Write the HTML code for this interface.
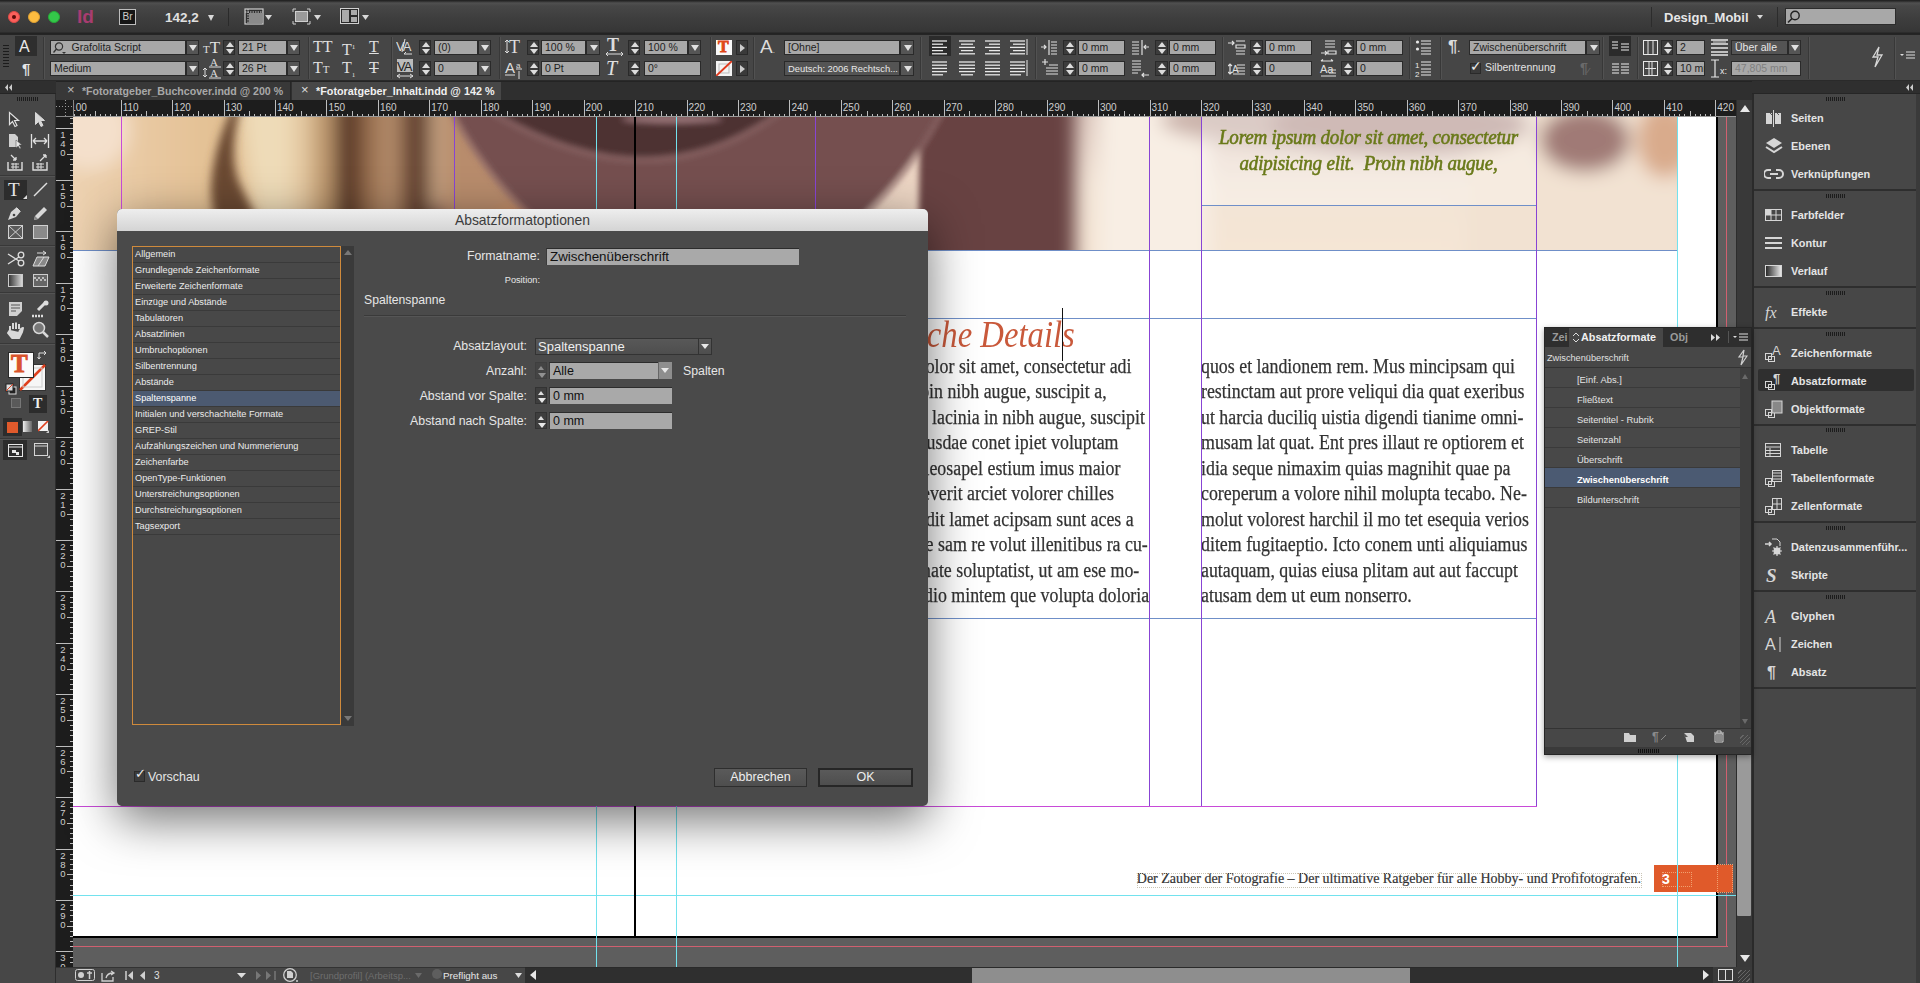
<!DOCTYPE html>
<html><head><meta charset="utf-8">
<style>
*{margin:0;padding:0;box-sizing:border-box}
html,body{width:1920px;height:983px;overflow:hidden;background:#474747;font-family:"Liberation Sans",sans-serif;color:#ddd}
.a{position:absolute}
#title{left:0;top:0;width:1920px;height:34px;background:linear-gradient(#414141,#353535);border-bottom:1px solid #222}
#ctrl{left:0;top:34px;width:1920px;height:47px;background:#454545;border-bottom:1px solid #2c2c2c}
#tabs{left:57px;top:81px;width:1695px;height:19px;background:#353535}
#hruler{left:73px;top:100px;width:1663px;height:17px;background:#1e1e1e}
#vruler{left:55px;top:100px;width:18px;height:867px;background:#1e1e1e}
#tools{left:0;top:81px;width:55px;height:902px;background:#474747;border-right:1px solid #333}
#paste{left:73px;top:117px;width:1663px;height:850px;background:#5e5e5e;overflow:hidden}
#page{left:0;top:0;width:1644px;height:820px;background:#fff;overflow:hidden}
#status{left:55px;top:967px;width:1697px;height:16px;background:#3a3a3a}
#vscroll{left:1736px;top:100px;width:16px;height:867px;background:#3b3b3b}
#dock{left:1752px;top:81px;width:168px;height:902px;background:#474747;border-left:3px solid #2f2f2f}
#dlg{left:117px;top:209px;width:811px;height:597px;background:#4a4a4a;border-radius:5px;box-shadow:0 14px 48px rgba(0,0,0,.55)}
#dlgt{left:0;top:0;width:811px;height:22px;background:linear-gradient(#eeeeee,#d4d4d4);border-radius:5px 5px 0 0;text-align:center;font-size:13.9px;color:#3c3c3c;line-height:22px}
#fpanel{left:1544px;top:327px;width:208px;height:428px;background:#4a4a4a;border:1px solid #2a2a2a}
.body{font-family:"Liberation Serif",serif;font-size:20px;color:#333;-webkit-text-stroke:0.25px #333;white-space:nowrap;line-height:20px}
.gv{background:#8a44d8;width:1px}
.gc{background:#6fe0ec}
.gb{background:#6f8fc8;height:1px}
.li{font-size:9.2px;line-height:15px;color:#ececec;padding-left:2px;border-bottom:1px solid #3a3a3a;white-space:nowrap}
.fld{background:#a9a9a9;border-top:1px solid #2c2c2c;border-left:1px solid #3a3a3a;color:#111;padding-left:3px;white-space:nowrap;overflow:hidden}
.dd{background:linear-gradient(#585858,#4e4e4e);border:1px solid #333;color:#eee;font-size:13px;line-height:15px;padding-left:2px}
.stp{width:12px;height:17px;background:#3e3e3e;border:1px solid #333}
.btn{background:linear-gradient(#5a5a5a,#4e4e4e);border:1px solid #2e2e2e;color:#eee;font-size:12.5px;line-height:17px;text-align:center}
.tri-up{width:0;height:0;border-left:4px solid transparent;border-right:4px solid transparent;border-bottom:5px solid #777}
.tri-dn{width:0;height:0;border-left:4px solid transparent;border-right:4px solid transparent;border-top:5px solid #777}
.tri-up2{width:0;height:0;border-left:3px solid transparent;border-right:3px solid transparent;border-bottom:4px solid #ddd}
.tri-dn2{width:0;height:0;border-left:4px solid transparent;border-right:4px solid transparent;border-top:5px solid #e8e8e8}
.cf{border:1px solid #2a2a2a;line-height:13px;padding-left:3px;white-space:nowrap;overflow:hidden;font-family:"Liberation Sans",sans-serif}

</style></head><body>
<div id="title" class="a"></div>
<div id="ctrl" class="a"></div>

<div class="a" style="left:0;top:0;width:1920px;height:35px;background:linear-gradient(#1e1e1e 0,#2a2a2a 1px,#505050 3px,#474747 6px,#3e3e3e 18px,#363636 32px,#222 33px,#262626 35px)"></div>
<div class="a" style="left:8px;top:11px;width:12px;height:12px;border-radius:50%;background:#fc605c;border:1px solid #de4a46"></div>
<div class="a" style="left:28px;top:11px;width:12px;height:12px;border-radius:50%;background:#fdbc40;border:1px solid #dea033"></div>
<div class="a" style="left:48px;top:11px;width:12px;height:12px;border-radius:50%;background:#34c84a;border:1px solid #27aa38"></div>
<div class="a" style="left:12px;top:15px;width:4px;height:4px;border-radius:50%;background:#5a0a08"></div>
<div class="a" style="left:77px;top:5px;font-size:19px;line-height:24px;color:#a83c70;font-weight:bold;letter-spacing:0px">Id</div>
<div class="a" style="left:119px;top:9px;width:17px;height:16px;background:#161616;border:1px solid #bdbdbd;font-size:10px;line-height:14px;color:#ccc;text-align:center">Br</div>
<div class="a" style="left:165px;top:9px;font-size:13.5px;line-height:17px;color:#e0e0e0;font-weight:bold">142,2</div>
<div class="a" style="left:208px;top:15px;width:0;height:0;border-left:3.5px solid transparent;border-right:3.5px solid transparent;border-top:6px solid #d8d8d8"></div>
<div class="a" style="left:228px;top:8px;width:1px;height:18px;background:#2a2a2a"></div>
<svg class="a" style="left:244px;top:8px" width="30" height="17"><rect x="1" y="1" width="18" height="15" fill="#2e2e2e" stroke="#cfcfcf" stroke-width="1.2"/><rect x="5" y="5" width="13" height="10" fill="#8a8a8a"/><path d="M1 4h18M4 1v15" stroke="#cfcfcf" stroke-width="1" stroke-dasharray="1.5 1"/><path d="M21 7h7l-3.5 5z" fill="#d8d8d8"/></svg>
<svg class="a" style="left:292px;top:8px" width="30" height="17"><path d="M1 4V1h3M15 1h3v3M1 13v3h3M15 16h3v-3" stroke="#cfcfcf" fill="none"/><rect x="3.5" y="3.5" width="12" height="10" fill="#9a9a9a" stroke="#cfcfcf"/><path d="M22 7h7l-3.5 5z" fill="#d8d8d8"/></svg>
<svg class="a" style="left:340px;top:8px" width="30" height="17"><rect x="0.5" y="0.5" width="18" height="15" fill="#2a2a2a" stroke="#d0d0d0"/><rect x="2" y="2" width="7" height="12" fill="#aaa"/><rect x="11" y="2" width="6" height="5" fill="#aaa"/><rect x="11" y="9" width="6" height="5" fill="#aaa"/><path d="M22 7h7l-3.5 5z" fill="#d8d8d8"/></svg>
<div class="a" style="left:1651px;top:7px;width:1px;height:20px;background:#2c2c2c"></div>
<div class="a" style="left:1664px;top:9px;font-size:13px;line-height:17px;color:#e6e6e6;font-weight:bold">Design_Mobil</div>
<div class="a" style="left:1757px;top:15px;width:0;height:0;border-left:3.0px solid transparent;border-right:3.0px solid transparent;border-top:4px solid #d8d8d8"></div>
<div class="a" style="left:1777px;top:7px;width:1px;height:20px;background:#2c2c2c"></div>
<div class="a" style="left:1785px;top:8px;width:111px;height:17px;background:#a8a8a8;border:1px solid #2c2c2c"></div>
<svg class="a" style="left:1786px;top:9px" width="16" height="16"><circle cx="9" cy="6.5" r="4.2" fill="none" stroke="#222" stroke-width="1.4"/><path d="M6 9.5l-4 4" stroke="#222" stroke-width="1.6"/></svg>
<div class="a" style="left:0;top:35px;width:1920px;height:46px;background:#464646;border-bottom:1px solid #2a2a2a"></div>
<div class="a" style="left:3px;top:45px;width:6px;height:23px;background:repeating-linear-gradient(#1c1c1c 0 1px,transparent 1px 3px)"></div>
<div class="a" style="left:15px;top:36px;width:22px;height:20px;background:#2e2e2e"></div>
<div class="a" style="left:19px;top:38px;font-family:'Liberation Sans';font-size:16px;line-height:18px;color:#eaeaea;white-space:nowrap;">A</div>
<div class="a" style="left:22px;top:60px;font-family:'Liberation Sans';font-size:15px;line-height:17px;color:#e6e6e6;white-space:nowrap;font-weight:bold">¶</div>
<div class="a" style="left:43px;top:37px;width:1px;height:42px;background:#383838"></div>
<div class="a" style="left:44px;top:37px;width:1px;height:42px;background:#525252"></div>
<div class="a cf" style="left:50px;top:40px;width:136px;height:15px;background:#a8a8a8;color:#1e1e1e;font-size:10.5px">&nbsp;&nbsp;&nbsp;&nbsp;&nbsp;&nbsp;Grafolita Script</div>
<svg class="a" style="left:52px;top:41px" width="16" height="14"><circle cx="7" cy="5.5" r="3.6" fill="none" stroke="#333" stroke-width="1.2"/><path d="M4.5 8l-3 3.5" stroke="#333" stroke-width="1.3"/><path d="M10 11h4l-2 2z" fill="#333"/></svg>
<div class="a" style="left:186px;top:40px;width:13px;height:15px;background:#555;border:1px solid #2a2a2a"><div class="a" style="left:2.0px;top:4px;width:0;height:0;border-left:4px solid transparent;border-right:4px solid transparent;border-top:6px solid #e0e0e0"></div></div>
<div class="a cf" style="left:50px;top:61px;width:136px;height:15px;background:#a8a8a8;color:#1e1e1e;font-size:10.5px">Medium</div>
<div class="a" style="left:186px;top:61px;width:13px;height:15px;background:#555;border:1px solid #2a2a2a"><div class="a" style="left:2.0px;top:4px;width:0;height:0;border-left:4px solid transparent;border-right:4px solid transparent;border-top:6px solid #e0e0e0"></div></div>
<div class="a" style="left:203px;top:38px;font-family:'Liberation Serif';font-size:17px;line-height:19px;color:#e0e0e0;white-space:nowrap;"><span style="font-size:11px">T</span>T</div>
<div class="a" style="left:223px;top:40px;width:12px;height:15px;background:#3c3c3c;border:1px solid #2a2a2a"><div class="a" style="left:1.5px;top:1px;width:0;height:0;border-left:4px solid transparent;border-right:4px solid transparent;border-bottom:5px solid #ddd"></div><div class="a" style="left:1.5px;top:8px;width:0;height:0;border-left:4px solid transparent;border-right:4px solid transparent;border-top:5px solid #ddd"></div></div>
<div class="a cf" style="left:238px;top:40px;width:49px;height:15px;background:#a8a8a8;color:#1e1e1e;font-size:10.5px">21 Pt</div>
<div class="a" style="left:287px;top:40px;width:13px;height:15px;background:#555;border:1px solid #2a2a2a"><div class="a" style="left:2.0px;top:4px;width:0;height:0;border-left:4px solid transparent;border-right:4px solid transparent;border-top:6px solid #e0e0e0"></div></div>
<svg class="a" style="left:202px;top:57px" width="20" height="22"><text x="8" y="9" font-family="Liberation Serif" font-size="11" fill="#ddd">A</text><text x="8" y="20" font-family="Liberation Serif" font-size="11" fill="#ddd">A</text><path d="M7 10h12M7 21h12" stroke="#ddd"/><path d="M3 11v9M1 13l2-2 2 2M1 18l2 2 2-2" stroke="#ddd" fill="none"/></svg>
<div class="a" style="left:223px;top:61px;width:12px;height:15px;background:#3c3c3c;border:1px solid #2a2a2a"><div class="a" style="left:1.5px;top:1px;width:0;height:0;border-left:4px solid transparent;border-right:4px solid transparent;border-bottom:5px solid #ddd"></div><div class="a" style="left:1.5px;top:8px;width:0;height:0;border-left:4px solid transparent;border-right:4px solid transparent;border-top:5px solid #ddd"></div></div>
<div class="a cf" style="left:238px;top:61px;width:49px;height:15px;background:#a8a8a8;color:#1e1e1e;font-size:10.5px">26 Pt</div>
<div class="a" style="left:287px;top:61px;width:13px;height:15px;background:#555;border:1px solid #2a2a2a"><div class="a" style="left:2.0px;top:4px;width:0;height:0;border-left:4px solid transparent;border-right:4px solid transparent;border-top:6px solid #e0e0e0"></div></div>
<div class="a" style="left:308px;top:37px;width:1px;height:42px;background:#383838"></div>
<div class="a" style="left:309px;top:37px;width:1px;height:42px;background:#525252"></div>
<div class="a" style="left:313px;top:38px;font-family:'Liberation Serif';font-size:16px;line-height:18px;color:#e0e0e0;white-space:nowrap;">TT</div>
<div class="a" style="left:342px;top:38px;font-family:'Liberation Serif';font-size:16px;line-height:18px;color:#e0e0e0;white-space:nowrap;">T<sup style="font-size:7px">1</sup></div>
<div class="a" style="left:369px;top:38px;font-family:'Liberation Serif';font-size:16px;line-height:18px;color:#e0e0e0;white-space:nowrap;"><u>T</u></div>
<div class="a" style="left:313px;top:59px;font-family:'Liberation Serif';font-size:16px;line-height:18px;color:#e0e0e0;white-space:nowrap;">T<span style="font-size:11px">T</span></div>
<div class="a" style="left:342px;top:59px;font-family:'Liberation Serif';font-size:16px;line-height:18px;color:#e0e0e0;white-space:nowrap;">T<sub style="font-size:7px">1</sub></div>
<div class="a" style="left:369px;top:59px;font-family:'Liberation Serif';font-size:16px;line-height:18px;color:#e0e0e0;white-space:nowrap;"><s>T</s></div>
<div class="a" style="left:391px;top:37px;width:1px;height:42px;background:#383838"></div>
<div class="a" style="left:392px;top:37px;width:1px;height:42px;background:#525252"></div>
<svg class="a" style="left:396px;top:38px" width="18" height="18"><text x="0" y="13" font-family="Liberation Sans" font-size="13" fill="#ddd" letter-spacing="-1">VA</text><path d="M9 1l-3 13" stroke="#ddd"/><path d="M8 16h8M8 16l2-2" stroke="#ddd" fill="none"/></svg>
<div class="a" style="left:419px;top:40px;width:12px;height:15px;background:#3c3c3c;border:1px solid #2a2a2a"><div class="a" style="left:1.5px;top:1px;width:0;height:0;border-left:4px solid transparent;border-right:4px solid transparent;border-bottom:5px solid #ddd"></div><div class="a" style="left:1.5px;top:8px;width:0;height:0;border-left:4px solid transparent;border-right:4px solid transparent;border-top:5px solid #ddd"></div></div>
<div class="a cf" style="left:434px;top:40px;width:44px;height:15px;background:#a8a8a8;color:#1e1e1e;font-size:10.5px">(0)</div>
<div class="a" style="left:478px;top:40px;width:13px;height:15px;background:#555;border:1px solid #2a2a2a"><div class="a" style="left:2.0px;top:4px;width:0;height:0;border-left:4px solid transparent;border-right:4px solid transparent;border-top:6px solid #e0e0e0"></div></div>
<svg class="a" style="left:396px;top:59px" width="18" height="20"><rect x="1" y="0" width="16" height="13" fill="#bbb"/><text x="1" y="12" font-family="Liberation Sans" font-size="13" fill="#222" letter-spacing="-1">VA</text><path d="M1 17h16M1 17l3-2M1 17l3 2M17 17l-3-2M17 17l-3 2" stroke="#ddd" fill="none"/></svg>
<div class="a" style="left:419px;top:61px;width:12px;height:15px;background:#3c3c3c;border:1px solid #2a2a2a"><div class="a" style="left:1.5px;top:1px;width:0;height:0;border-left:4px solid transparent;border-right:4px solid transparent;border-bottom:5px solid #ddd"></div><div class="a" style="left:1.5px;top:8px;width:0;height:0;border-left:4px solid transparent;border-right:4px solid transparent;border-top:5px solid #ddd"></div></div>
<div class="a cf" style="left:434px;top:61px;width:44px;height:15px;background:#a8a8a8;color:#1e1e1e;font-size:10.5px">0</div>
<div class="a" style="left:478px;top:61px;width:13px;height:15px;background:#555;border:1px solid #2a2a2a"><div class="a" style="left:2.0px;top:4px;width:0;height:0;border-left:4px solid transparent;border-right:4px solid transparent;border-top:6px solid #e0e0e0"></div></div>
<div class="a" style="left:499px;top:37px;width:1px;height:42px;background:#383838"></div>
<div class="a" style="left:500px;top:37px;width:1px;height:42px;background:#525252"></div>
<svg class="a" style="left:504px;top:38px" width="20" height="18"><text x="5" y="15" font-family="Liberation Serif" font-size="18" fill="#ddd">T</text><path d="M3 2v13M1 4l2-2 2 2M1 13l2 2 2-2" stroke="#ddd" fill="none"/></svg>
<div class="a" style="left:527px;top:40px;width:12px;height:15px;background:#3c3c3c;border:1px solid #2a2a2a"><div class="a" style="left:1.5px;top:1px;width:0;height:0;border-left:4px solid transparent;border-right:4px solid transparent;border-bottom:5px solid #ddd"></div><div class="a" style="left:1.5px;top:8px;width:0;height:0;border-left:4px solid transparent;border-right:4px solid transparent;border-top:5px solid #ddd"></div></div>
<div class="a cf" style="left:541px;top:40px;width:45px;height:15px;background:#a8a8a8;color:#1e1e1e;font-size:10.5px">100 %</div>
<div class="a" style="left:586px;top:40px;width:14px;height:15px;background:#555;border:1px solid #2a2a2a"><div class="a" style="left:2.5px;top:4px;width:0;height:0;border-left:4px solid transparent;border-right:4px solid transparent;border-top:6px solid #e0e0e0"></div></div>
<svg class="a" style="left:504px;top:59px" width="20" height="20"><text x="1" y="14" font-family="Liberation Sans" font-size="15" fill="#ddd">A</text><text x="12" y="9" font-family="Liberation Sans" font-size="8" fill="#ddd">a</text><path d="M1 16h10M12 10h6M15 12v8" stroke="#ddd"/></svg>
<div class="a" style="left:527px;top:61px;width:12px;height:15px;background:#3c3c3c;border:1px solid #2a2a2a"><div class="a" style="left:1.5px;top:1px;width:0;height:0;border-left:4px solid transparent;border-right:4px solid transparent;border-bottom:5px solid #ddd"></div><div class="a" style="left:1.5px;top:8px;width:0;height:0;border-left:4px solid transparent;border-right:4px solid transparent;border-top:5px solid #ddd"></div></div>
<div class="a cf" style="left:541px;top:61px;width:59px;height:15px;background:#a8a8a8;color:#1e1e1e;font-size:10.5px">0 Pt</div>
<svg class="a" style="left:605px;top:37px" width="20" height="20"><text x="2" y="14" font-family="Liberation Serif" font-size="18" font-weight="bold" fill="#ddd">T</text><path d="M1 17h17M1 17l2-2M1 17l2 2M18 17l-2-2M18 17l-2 2" stroke="#ddd" fill="none"/></svg>
<div class="a" style="left:628px;top:40px;width:12px;height:15px;background:#3c3c3c;border:1px solid #2a2a2a"><div class="a" style="left:1.5px;top:1px;width:0;height:0;border-left:4px solid transparent;border-right:4px solid transparent;border-bottom:5px solid #ddd"></div><div class="a" style="left:1.5px;top:8px;width:0;height:0;border-left:4px solid transparent;border-right:4px solid transparent;border-top:5px solid #ddd"></div></div>
<div class="a cf" style="left:644px;top:40px;width:44px;height:15px;background:#a8a8a8;color:#1e1e1e;font-size:10.5px">100 %</div>
<div class="a" style="left:688px;top:40px;width:13px;height:15px;background:#555;border:1px solid #2a2a2a"><div class="a" style="left:2.0px;top:4px;width:0;height:0;border-left:4px solid transparent;border-right:4px solid transparent;border-top:6px solid #e0e0e0"></div></div>
<div class="a" style="left:606px;top:57px;font-family:'Liberation Serif';font-size:20px;line-height:22px;color:#e0e0e0;white-space:nowrap;"><i>T</i></div>
<div class="a" style="left:628px;top:61px;width:12px;height:15px;background:#3c3c3c;border:1px solid #2a2a2a"><div class="a" style="left:1.5px;top:1px;width:0;height:0;border-left:4px solid transparent;border-right:4px solid transparent;border-bottom:5px solid #ddd"></div><div class="a" style="left:1.5px;top:8px;width:0;height:0;border-left:4px solid transparent;border-right:4px solid transparent;border-top:5px solid #ddd"></div></div>
<div class="a cf" style="left:644px;top:61px;width:57px;height:15px;background:#a8a8a8;color:#1e1e1e;font-size:10.5px">0°</div>
<div class="a" style="left:710px;top:37px;width:1px;height:42px;background:#383838"></div>
<div class="a" style="left:711px;top:37px;width:1px;height:42px;background:#525252"></div>
<div class="a" style="left:716px;top:40px;width:16px;height:15px;background:#fafafa"></div>
<div class="a" style="left:718px;top:38px;font-family:'Liberation Serif';font-size:16px;line-height:18px;color:#e0461a;white-space:nowrap;-webkit-text-stroke:0.8px #e0461a"><b>T</b></div>
<div class="a" style="left:736px;top:40px;width:12px;height:15px;background:#3a3a3a;border:1px solid #2a2a2a"><div class="a" style="left:3px;top:3px;width:0;height:0;border-top:4px solid transparent;border-bottom:4px solid transparent;border-left:5px solid #ccc"></div></div>
<svg class="a" style="left:716px;top:61px" width="16" height="15"><rect width="16" height="15" fill="#f4f4f4"/><rect x="3" y="3" width="10" height="9" fill="none" stroke="#bbb"/><path d="M0 15L16 0" stroke="#e03a1e" stroke-width="2"/></svg>
<div class="a" style="left:736px;top:61px;width:12px;height:15px;background:#3a3a3a;border:1px solid #2a2a2a"><div class="a" style="left:3px;top:3px;width:0;height:0;border-top:4px solid transparent;border-bottom:4px solid transparent;border-left:5px solid #ccc"></div></div>
<div class="a" style="left:753px;top:37px;width:1px;height:42px;background:#383838"></div>
<div class="a" style="left:754px;top:37px;width:1px;height:42px;background:#525252"></div>
<div class="a" style="left:760px;top:36px;font-family:'Liberation Sans';font-size:19px;line-height:21px;color:#dcdcdc;white-space:nowrap;">A<span style="font-size:8px">.</span></div>
<div class="a cf" style="left:784px;top:40px;width:116px;height:15px;background:#a8a8a8;color:#1e1e1e;font-size:10.5px">[Ohne]</div>
<div class="a" style="left:900px;top:40px;width:14px;height:15px;background:#555;border:1px solid #2a2a2a"><div class="a" style="left:2.5px;top:4px;width:0;height:0;border-left:4px solid transparent;border-right:4px solid transparent;border-top:6px solid #e0e0e0"></div></div>
<div class="a cf" style="left:784px;top:61px;width:116px;height:15px;background:#545454;color:#e8e8e8;font-size:9.4px">Deutsch: 2006 Rechtsch...</div>
<div class="a" style="left:900px;top:61px;width:14px;height:15px;background:#555;border:1px solid #2a2a2a"><div class="a" style="left:2.5px;top:4px;width:0;height:0;border-left:4px solid transparent;border-right:4px solid transparent;border-top:6px solid #e0e0e0"></div></div>
<div class="a" style="left:920px;top:37px;width:1px;height:42px;background:#383838"></div>
<div class="a" style="left:921px;top:37px;width:1px;height:42px;background:#525252"></div>
<div class="a" style="left:929px;top:36px;width:22px;height:20px;background:#2b2b2b"></div>
<svg class="a" style="left:931px;top:39px" width="20" height="17"><path d="M1 2.0h15" stroke="#e8e8e8" stroke-width="1.3"/><path d="M1 5.2h11" stroke="#e8e8e8" stroke-width="1.3"/><path d="M1 8.4h15" stroke="#e8e8e8" stroke-width="1.3"/><path d="M1 11.6h11" stroke="#e8e8e8" stroke-width="1.3"/><path d="M1 14.8h15" stroke="#e8e8e8" stroke-width="1.3"/></svg>
<svg class="a" style="left:958px;top:39px" width="20" height="17"><path d="M1 2.0h16" stroke="#e8e8e8" stroke-width="1.3"/><path d="M3 5.2h12" stroke="#e8e8e8" stroke-width="1.3"/><path d="M1 8.4h16" stroke="#e8e8e8" stroke-width="1.3"/><path d="M3 11.6h12" stroke="#e8e8e8" stroke-width="1.3"/><path d="M1 14.8h16" stroke="#e8e8e8" stroke-width="1.3"/></svg>
<svg class="a" style="left:984px;top:39px" width="20" height="17"><path d="M1 2.0h15" stroke="#e8e8e8" stroke-width="1.3"/><path d="M5 5.2h11" stroke="#e8e8e8" stroke-width="1.3"/><path d="M1 8.4h15" stroke="#e8e8e8" stroke-width="1.3"/><path d="M5 11.6h11" stroke="#e8e8e8" stroke-width="1.3"/><path d="M1 14.8h15" stroke="#e8e8e8" stroke-width="1.3"/></svg>
<svg class="a" style="left:1009px;top:39px" width="20" height="17"><path d="M1 2.0h15" stroke="#e8e8e8" stroke-width="1.3"/><path d="M4 5.2h12" stroke="#e8e8e8" stroke-width="1.3"/><path d="M1 8.4h15" stroke="#e8e8e8" stroke-width="1.3"/><path d="M4 11.6h12" stroke="#e8e8e8" stroke-width="1.3"/><path d="M1 14.8h15" stroke="#e8e8e8" stroke-width="1.3"/><path d="M18 0v16" stroke="#e8e8e8"/></svg>
<svg class="a" style="left:931px;top:60px" width="20" height="17"><path d="M1 2.0h15" stroke="#e8e8e8" stroke-width="1.3"/><path d="M1 5.2h15" stroke="#e8e8e8" stroke-width="1.3"/><path d="M1 8.4h15" stroke="#e8e8e8" stroke-width="1.3"/><path d="M1 11.6h15" stroke="#e8e8e8" stroke-width="1.3"/><path d="M1 14.8h11" stroke="#e8e8e8" stroke-width="1.3"/></svg>
<svg class="a" style="left:958px;top:60px" width="20" height="17"><path d="M1 2.0h16" stroke="#e8e8e8" stroke-width="1.3"/><path d="M1 5.2h16" stroke="#e8e8e8" stroke-width="1.3"/><path d="M1 8.4h16" stroke="#e8e8e8" stroke-width="1.3"/><path d="M1 11.6h16" stroke="#e8e8e8" stroke-width="1.3"/><path d="M3 14.8h12" stroke="#e8e8e8" stroke-width="1.3"/></svg>
<svg class="a" style="left:984px;top:60px" width="20" height="17"><path d="M1 2.0h15" stroke="#e8e8e8" stroke-width="1.3"/><path d="M1 5.2h15" stroke="#e8e8e8" stroke-width="1.3"/><path d="M1 8.4h15" stroke="#e8e8e8" stroke-width="1.3"/><path d="M1 11.6h15" stroke="#e8e8e8" stroke-width="1.3"/><path d="M1 14.8h15" stroke="#e8e8e8" stroke-width="1.3"/></svg>
<svg class="a" style="left:1009px;top:60px" width="20" height="17"><path d="M1 2.0h15" stroke="#e8e8e8" stroke-width="1.3"/><path d="M1 5.2h15" stroke="#e8e8e8" stroke-width="1.3"/><path d="M1 8.4h15" stroke="#e8e8e8" stroke-width="1.3"/><path d="M1 11.6h15" stroke="#e8e8e8" stroke-width="1.3"/><path d="M1 14.8h11" stroke="#e8e8e8" stroke-width="1.3"/><path d="M18 0v16" stroke="#e8e8e8"/></svg>
<div class="a" style="left:1035px;top:37px;width:1px;height:42px;background:#383838"></div>
<div class="a" style="left:1036px;top:37px;width:1px;height:42px;background:#525252"></div>
<svg class="a" style="left:1041px;top:39px" width="19" height="19"><g stroke="#e0e0e0" stroke-width="1.2" fill="none"><path d="M0 8h5M3 6l2 2-2 2M8 1v15M10 3h6M10 6h6M10 9h6M10 12h6M10 15h6"/></g></svg>
<div class="a" style="left:1063px;top:40px;width:13px;height:15px;background:#3c3c3c;border:1px solid #2a2a2a"><div class="a" style="left:2.0px;top:1px;width:0;height:0;border-left:4px solid transparent;border-right:4px solid transparent;border-bottom:5px solid #ddd"></div><div class="a" style="left:2.0px;top:8px;width:0;height:0;border-left:4px solid transparent;border-right:4px solid transparent;border-top:5px solid #ddd"></div></div>
<div class="a cf" style="left:1078px;top:40px;width:47px;height:15px;background:#a8a8a8;color:#1e1e1e;font-size:10.5px">0 mm</div>
<svg class="a" style="left:1131px;top:39px" width="19" height="19"><g stroke="#e0e0e0" stroke-width="1.2" fill="none"><path d="M1 3h7M1 6h7M1 9h7M1 12h7M1 15h7M11 1v15M18 8h-5M15 6l-2 2 2 2"/></g></svg>
<div class="a" style="left:1155px;top:40px;width:13px;height:15px;background:#3c3c3c;border:1px solid #2a2a2a"><div class="a" style="left:2.0px;top:1px;width:0;height:0;border-left:4px solid transparent;border-right:4px solid transparent;border-bottom:5px solid #ddd"></div><div class="a" style="left:2.0px;top:8px;width:0;height:0;border-left:4px solid transparent;border-right:4px solid transparent;border-top:5px solid #ddd"></div></div>
<div class="a cf" style="left:1169px;top:40px;width:47px;height:15px;background:#a8a8a8;color:#1e1e1e;font-size:10.5px">0 mm</div>
<svg class="a" style="left:1041px;top:59px" width="19" height="19"><g stroke="#e0e0e0" stroke-width="1.2" fill="none"><path d="M1 3h6M4 0v6M8 6h9M5 9h12M5 12h12M5 15h12"/></g></svg>
<div class="a" style="left:1063px;top:61px;width:13px;height:15px;background:#3c3c3c;border:1px solid #2a2a2a"><div class="a" style="left:2.0px;top:1px;width:0;height:0;border-left:4px solid transparent;border-right:4px solid transparent;border-bottom:5px solid #ddd"></div><div class="a" style="left:2.0px;top:8px;width:0;height:0;border-left:4px solid transparent;border-right:4px solid transparent;border-top:5px solid #ddd"></div></div>
<div class="a cf" style="left:1078px;top:61px;width:47px;height:15px;background:#a8a8a8;color:#1e1e1e;font-size:10.5px">0 mm</div>
<svg class="a" style="left:1131px;top:59px" width="19" height="19"><g stroke="#e0e0e0" stroke-width="1.2" fill="none"><path d="M1 2h9M1 5h9M1 8h9M1 11h9M1 14h6M11 16h7M13 14l-2 2 2 2"/></g></svg>
<div class="a" style="left:1155px;top:61px;width:13px;height:15px;background:#3c3c3c;border:1px solid #2a2a2a"><div class="a" style="left:2.0px;top:1px;width:0;height:0;border-left:4px solid transparent;border-right:4px solid transparent;border-bottom:5px solid #ddd"></div><div class="a" style="left:2.0px;top:8px;width:0;height:0;border-left:4px solid transparent;border-right:4px solid transparent;border-top:5px solid #ddd"></div></div>
<div class="a cf" style="left:1169px;top:61px;width:47px;height:15px;background:#a8a8a8;color:#1e1e1e;font-size:10.5px">0 mm</div>
<div class="a" style="left:1222px;top:37px;width:1px;height:42px;background:#383838"></div>
<div class="a" style="left:1223px;top:37px;width:1px;height:42px;background:#525252"></div>
<svg class="a" style="left:1228px;top:39px" width="19" height="19"><g stroke="#e0e0e0" stroke-width="1.2" fill="none"><path d="M0 4h6M4 2l2 2-2 2M8 2h9M8 6h9v3H8zM8 12h9M8 15h9"/></g></svg>
<div class="a" style="left:1250px;top:40px;width:13px;height:15px;background:#3c3c3c;border:1px solid #2a2a2a"><div class="a" style="left:2.0px;top:1px;width:0;height:0;border-left:4px solid transparent;border-right:4px solid transparent;border-bottom:5px solid #ddd"></div><div class="a" style="left:2.0px;top:8px;width:0;height:0;border-left:4px solid transparent;border-right:4px solid transparent;border-top:5px solid #ddd"></div></div>
<div class="a cf" style="left:1265px;top:40px;width:47px;height:15px;background:#a8a8a8;color:#1e1e1e;font-size:10.5px">0 mm</div>
<svg class="a" style="left:1319px;top:39px" width="19" height="19"><g stroke="#e0e0e0" stroke-width="1.2" fill="none"><path d="M6 2h10M6 5h10M6 8h10M2 14h6M6 12l2 2-2 2M9 12h8v3H9z"/></g></svg>
<div class="a" style="left:1341px;top:40px;width:13px;height:15px;background:#3c3c3c;border:1px solid #2a2a2a"><div class="a" style="left:2.0px;top:1px;width:0;height:0;border-left:4px solid transparent;border-right:4px solid transparent;border-bottom:5px solid #ddd"></div><div class="a" style="left:2.0px;top:8px;width:0;height:0;border-left:4px solid transparent;border-right:4px solid transparent;border-top:5px solid #ddd"></div></div>
<div class="a cf" style="left:1356px;top:40px;width:47px;height:15px;background:#a8a8a8;color:#1e1e1e;font-size:10.5px">0 mm</div>
<svg class="a" style="left:1228px;top:59px" width="19" height="19"><g stroke="#e0e0e0" stroke-width="1.2" fill="none"><path d="M2 5v10M0 7l2-2 2 2M0 13l2 2 2-2M9 6h8M9 9h8M9 12h8M5 15h12"/><text x="4" y="14" font-family="Liberation Sans" font-size="10" fill="#e0e0e0" stroke="none">A</text></g></svg>
<div class="a" style="left:1250px;top:61px;width:13px;height:15px;background:#3c3c3c;border:1px solid #2a2a2a"><div class="a" style="left:2.0px;top:1px;width:0;height:0;border-left:4px solid transparent;border-right:4px solid transparent;border-bottom:5px solid #ddd"></div><div class="a" style="left:2.0px;top:8px;width:0;height:0;border-left:4px solid transparent;border-right:4px solid transparent;border-top:5px solid #ddd"></div></div>
<div class="a cf" style="left:1265px;top:61px;width:47px;height:15px;background:#a8a8a8;color:#1e1e1e;font-size:10.5px">0</div>
<svg class="a" style="left:1319px;top:59px" width="19" height="19"><g stroke="#e0e0e0" stroke-width="1.2" fill="none"><path d="M2 2h12M2 2l2-1.5M14 2l-2-1.5M2 17h15M10 11h7M10 14h7"/><text x="1" y="14" font-family="Liberation Sans" font-size="11" fill="#e0e0e0" stroke="none">Aa</text></g></svg>
<div class="a" style="left:1341px;top:61px;width:13px;height:15px;background:#3c3c3c;border:1px solid #2a2a2a"><div class="a" style="left:2.0px;top:1px;width:0;height:0;border-left:4px solid transparent;border-right:4px solid transparent;border-bottom:5px solid #ddd"></div><div class="a" style="left:2.0px;top:8px;width:0;height:0;border-left:4px solid transparent;border-right:4px solid transparent;border-top:5px solid #ddd"></div></div>
<div class="a cf" style="left:1356px;top:61px;width:47px;height:15px;background:#a8a8a8;color:#1e1e1e;font-size:10.5px">0</div>
<div class="a" style="left:1409px;top:37px;width:1px;height:42px;background:#383838"></div>
<div class="a" style="left:1410px;top:37px;width:1px;height:42px;background:#525252"></div>
<svg class="a" style="left:1415px;top:39px" width="18" height="18"><circle cx="2.5" cy="3" r="1.6" fill="#e8e8e8"/><circle cx="2.5" cy="10" r="1.6" fill="#e8e8e8"/><path d="M6 2h10M6 5h10M6 9h10M6 12h10M6 15h10" stroke="#e8e8e8" stroke-width="1.2"/></svg>
<svg class="a" style="left:1415px;top:60px" width="18" height="18"><text x="0" y="8" font-family="Liberation Sans" font-size="8" fill="#e8e8e8">1</text><text x="0" y="17" font-family="Liberation Sans" font-size="8" fill="#e8e8e8">2</text><path d="M6 2h10M6 5h10M6 9h10M6 12h10M6 15h10" stroke="#e8e8e8" stroke-width="1.2"/></svg>
<div class="a" style="left:1440px;top:37px;width:1px;height:42px;background:#383838"></div>
<div class="a" style="left:1441px;top:37px;width:1px;height:42px;background:#525252"></div>
<div class="a" style="left:1448px;top:37px;font-family:'Liberation Sans';font-size:17px;line-height:19px;color:#dcdcdc;white-space:nowrap;font-weight:bold">¶<span style="font-size:9px">.</span></div>
<div class="a cf" style="left:1469px;top:40px;width:117px;height:15px;background:#a8a8a8;color:#1e1e1e;font-size:10.5px">Zwischenüberschrift</div>
<div class="a" style="left:1586px;top:40px;width:14px;height:15px;background:#555;border:1px solid #2a2a2a"><div class="a" style="left:2.5px;top:4px;width:0;height:0;border-left:4px solid transparent;border-right:4px solid transparent;border-top:6px solid #e0e0e0"></div></div>
<div class="a" style="left:1470px;top:63px;width:11px;height:11px;background:#3a3a3a;border:1px solid #2a2a2a"></div>
<div class="a" style="left:1470px;top:58px;font-family:'Liberation Sans';font-size:14px;line-height:16px;color:#eee;white-space:nowrap;">&#10003;</div>
<div class="a" style="left:1485px;top:61px;font-family:'Liberation Sans';font-size:10.5px;line-height:12.5px;color:#e4e4e4;white-space:nowrap;">Silbentrennung</div>
<div class="a" style="left:1580px;top:60px;font-family:'Liberation Sans';font-size:14px;line-height:16px;color:#6a6a6a;white-space:nowrap;font-weight:bold">¶<span style="font-size:8px">⁄</span></div>
<div class="a" style="left:1602px;top:37px;width:1px;height:42px;background:#383838"></div>
<div class="a" style="left:1603px;top:37px;width:1px;height:42px;background:#525252"></div>
<div class="a" style="left:1609px;top:36px;width:22px;height:20px;background:#2b2b2b"></div>
<svg class="a" style="left:1611px;top:41px" width="20" height="12"><path d="M1 1h6M1 4h6M1 7h6M10 3h8M10 6h8M10 9h8" stroke="#eee" stroke-width="1.2"/></svg>
<svg class="a" style="left:1611px;top:62px" width="20" height="12"><path d="M1 2h7M1 5h7M1 8h7M1 11h7M10 2h8M10 5h8M10 8h8M10 11h8" stroke="#eee" stroke-width="1.2"/></svg>
<div class="a" style="left:1637px;top:37px;width:1px;height:42px;background:#383838"></div>
<div class="a" style="left:1638px;top:37px;width:1px;height:42px;background:#525252"></div>
<svg class="a" style="left:1643px;top:40px" width="16" height="15"><rect x="0.5" y="0.5" width="14" height="14" fill="none" stroke="#e8e8e8"/><path d="M5 1v13M10 1v13" stroke="#e8e8e8"/></svg>
<div class="a" style="left:1661px;top:40px;width:12px;height:15px;background:#3c3c3c;border:1px solid #2a2a2a"><div class="a" style="left:1.5px;top:1px;width:0;height:0;border-left:4px solid transparent;border-right:4px solid transparent;border-bottom:5px solid #ddd"></div><div class="a" style="left:1.5px;top:8px;width:0;height:0;border-left:4px solid transparent;border-right:4px solid transparent;border-top:5px solid #ddd"></div></div>
<div class="a cf" style="left:1676px;top:40px;width:29px;height:15px;background:#a8a8a8;color:#1e1e1e;font-size:10.5px">2</div>
<svg class="a" style="left:1710px;top:38px" width="19" height="19"><path d="M1 2h17M1 6h17M1 10h17M1 14h17M1 17h17" stroke="#e8e8e8" stroke-width="1.3"/><path d="M3 4h13" stroke="#e8e8e8" stroke-width=".8"/></svg>
<div class="a cf" style="left:1731px;top:40px;width:57px;height:15px;background:#545454;color:#e8e8e8;font-size:10.5px">Über alle</div>
<div class="a" style="left:1788px;top:40px;width:13px;height:15px;background:#555;border:1px solid #2a2a2a"><div class="a" style="left:2.0px;top:4px;width:0;height:0;border-left:4px solid transparent;border-right:4px solid transparent;border-top:6px solid #e0e0e0"></div></div>
<svg class="a" style="left:1643px;top:61px" width="16" height="15"><rect x="0.5" y="0.5" width="14" height="14" fill="none" stroke="#e8e8e8"/><path d="M6 1v13M9 1v13M2 7.5h11" stroke="#e8e8e8"/></svg>
<div class="a" style="left:1661px;top:61px;width:12px;height:15px;background:#3c3c3c;border:1px solid #2a2a2a"><div class="a" style="left:1.5px;top:1px;width:0;height:0;border-left:4px solid transparent;border-right:4px solid transparent;border-bottom:5px solid #ddd"></div><div class="a" style="left:1.5px;top:8px;width:0;height:0;border-left:4px solid transparent;border-right:4px solid transparent;border-top:5px solid #ddd"></div></div>
<div class="a cf" style="left:1676px;top:61px;width:29px;height:15px;background:#a8a8a8;color:#1e1e1e;font-size:10.5px">10 mm</div>
<svg class="a" style="left:1709px;top:59px" width="20" height="20"><path d="M2 1h8M6 1v17M2 18h8" stroke="#e8e8e8" stroke-width="1.2"/><text x="11" y="15" font-family="Liberation Sans" font-size="9" fill="#e8e8e8">x:</text></svg>
<div class="a cf" style="left:1731px;top:61px;width:70px;height:15px;background:#a8a8a8;color:#808080;font-size:10.5px">47,805 mm</div>
<div class="a" style="left:1808px;top:37px;width:1px;height:42px;background:#383838"></div>
<div class="a" style="left:1809px;top:37px;width:1px;height:42px;background:#525252"></div>
<svg class="a" style="left:1870px;top:46px" width="14" height="22"><path d="M9 1L3 11h5l-3 10 7-12H7z" fill="none" stroke="#d8d8d8" stroke-width="1.3"/></svg>
<div class="a" style="left:1894px;top:37px;width:1px;height:42px;background:#383838"></div>
<div class="a" style="left:1895px;top:37px;width:1px;height:42px;background:#525252"></div>
<svg class="a" style="left:1900px;top:51px" width="16" height="10"><path d="M0 3h4l-2 2z" fill="#ddd"/><path d="M6 1h9M6 4h9M6 7h9" stroke="#ddd" stroke-width="1.2"/></svg>
<div class="a" style="left:0;top:81px;width:56px;height:902px;background:#474747;border-right:1px solid #2e2e2e"></div>
<div class="a" style="left:0;top:81px;width:56px;height:13px;background:#2f2f2f;border-bottom:1px solid #252525"></div>
<svg class="a" style="left:4px;top:83px" width="10" height="9"><path d="M4 1L1 4.5 4 8zM8 1L5 4.5 8 8z" fill="#ccc"/></svg>
<div class="a" style="left:17px;top:97px;width:21px;height:4px;background:repeating-linear-gradient(90deg,#1c1c1c 0 1px,transparent 1px 2px)"></div>
<svg class="a" style="left:8px;top:111px" width="14" height="17"><path d="M1.5 1.5v12l3-3 2.5 5 2-1-2.5-5h4z" fill="#3a3a3a" stroke="#e0e0e0" stroke-width="1.2"/></svg>
<svg class="a" style="left:34px;top:111px" width="14" height="17"><path d="M1.5 1.5v12l3-3 2.5 5 2-1-2.5-5h4z" fill="#d8d8d8" stroke="#d8d8d8" stroke-width="1"/></svg>
<svg class="a" style="left:8px;top:133px" width="15" height="16"><path d="M1 1h6l3 3v10H1z" fill="#d0d0d0"/><path d="M8 7v8l2-2 2 3 1-1-2-3h3z" fill="#e6e6e6" stroke="#444" stroke-width=".5"/></svg>
<svg class="a" style="left:30px;top:133px" width="20" height="16"><path d="M1.5 1v14M18.5 1v14M3 8h14M3 8l3-3M3 8l3 3M17 8l-3-3M17 8l-3 3" stroke="#e0e0e0" stroke-width="1.3" fill="none"/></svg>
<svg class="a" style="left:7px;top:154px" width="17" height="17"><path d="M1 8v8h14V8" stroke="#ddd" fill="none" stroke-width="1.4"/><path d="M4 10h8M4 13h8M6 9v6M9 9v6" stroke="#ddd"/><path d="M4 1l5 5M9 6V3M9 6H6" stroke="#ddd" stroke-width="1.3" fill="none"/></svg>
<svg class="a" style="left:32px;top:154px" width="17" height="17"><path d="M1 8v8h14V8" stroke="#ddd" fill="none" stroke-width="1.4"/><path d="M4 10h8M4 13h8M6 9v6M9 9v6" stroke="#ddd"/><path d="M8 7l6-6M14 1v3M14 1h-3" stroke="#ddd" stroke-width="1.3" fill="none"/></svg>
<div class="a" style="left:0;top:175px;width:55px;height:1px;background:#383838"></div>
<div class="a" style="left:0;top:176px;width:55px;height:1px;background:#545454"></div>
<div class="a" style="left:4px;top:180px;width:23px;height:20px;background:#2c2c2c"></div>
<div class="a" style="left:8px;top:180px;font-family:'Liberation Serif';font-size:19px;line-height:20px;color:#e6e6e6">T</div>
<svg class="a" style="left:23px;top:195px" width="4" height="4"><path d="M4 0v4H0z" fill="#ddd"/></svg>
<svg class="a" style="left:33px;top:182px" width="15" height="15"><path d="M1 14L14 1" stroke="#e0e0e0" stroke-width="1.4"/></svg>
<svg class="a" style="left:6px;top:204px" width="18" height="18"><path d="M2 16l3-8 6-5 4 4-5 6z" fill="#d8d8d8"/><circle cx="8" cy="11" r="1.3" fill="#444"/><path d="M11 3l4 4" stroke="#444"/></svg>
<svg class="a" style="left:32px;top:204px" width="16" height="18"><path d="M2 16l1-4 9-9 3 3-9 9z" fill="#d8d8d8"/><path d="M2 16l1-4 3 3z" fill="#888"/></svg>
<svg class="a" style="left:8px;top:225px" width="15" height="14"><rect x="0.5" y="0.5" width="14" height="13" fill="#5a5a5a" stroke="#d0d0d0"/><path d="M1 1l13 12M14 1L1 13" stroke="#d0d0d0"/></svg>
<svg class="a" style="left:33px;top:225px" width="15" height="14"><rect x="0.5" y="0.5" width="14" height="13" fill="#8a8a8a" stroke="#d0d0d0"/></svg>
<div class="a" style="left:0;top:245px;width:55px;height:1px;background:#383838"></div>
<div class="a" style="left:0;top:246px;width:55px;height:1px;background:#545454"></div>
<svg class="a" style="left:7px;top:251px" width="18" height="16"><circle cx="14" cy="4" r="2.8" fill="none" stroke="#ddd" stroke-width="1.3"/><circle cx="14" cy="12" r="2.8" fill="none" stroke="#ddd" stroke-width="1.3"/><path d="M1 3l11 7M1 13l11-7" stroke="#ddd" stroke-width="1.4"/></svg>
<svg class="a" style="left:32px;top:250px" width="18" height="18"><path d="M5 3h9M11 1l3 2-3 2" stroke="#ddd" fill="none"/><path d="M1 16l4-9h12l-4 9z" fill="#888" stroke="#ddd"/><path d="M6 16l6-9" stroke="#ddd"/></svg>
<svg class="a" style="left:8px;top:274px" width="15" height="13"><defs><linearGradient id="tg"><stop offset="0" stop-color="#333"/><stop offset="1" stop-color="#ddd"/></linearGradient></defs><rect x="0.5" y="0.5" width="14" height="12" fill="url(#tg)" stroke="#ccc"/></svg>
<svg class="a" style="left:33px;top:274px" width="15" height="13"><rect x="0.5" y="0.5" width="14" height="12" fill="#666" stroke="#ccc"/><path d="M1 4h2v2h2V4h2v2h2V4h2v2h2" fill="none" stroke="#bbb" stroke-width="2" stroke-dasharray="2 2"/></svg>
<div class="a" style="left:0;top:292px;width:55px;height:1px;background:#383838"></div>
<div class="a" style="left:0;top:293px;width:55px;height:1px;background:#545454"></div>
<svg class="a" style="left:8px;top:301px" width="15" height="16"><path d="M1 1h13v9l-5 5H1z" fill="#d0d0d0"/><path d="M3 4h9M3 7h9M3 10h5" stroke="#555"/></svg>
<svg class="a" style="left:31px;top:300px" width="18" height="18"><path d="M15 2l-8 8" stroke="#ddd" stroke-width="3"/><circle cx="15" cy="3" r="2.5" fill="#ddd"/><path d="M1 16h12" stroke="#ddd" stroke-dasharray="2 1" stroke-width="2.5"/></svg>
<svg class="a" style="left:7px;top:321px" width="17" height="18"><path d="M3 9V5M6 8V2M9 8V1.5M12 8V3M3 9l-2 3 4 5h7l3-6 1-4-2 1-2 3" stroke="#d8d8d8" stroke-width="2" fill="#d8d8d8" stroke-linejoin="round"/></svg>
<svg class="a" style="left:32px;top:321px" width="17" height="18"><circle cx="7" cy="7" r="5.5" fill="#777" stroke="#d8d8d8" stroke-width="1.5"/><path d="M11 11l5 5" stroke="#d8d8d8" stroke-width="2.5"/></svg>
<div class="a" style="left:0;top:343px;width:55px;height:1px;background:#383838"></div>
<div class="a" style="left:0;top:344px;width:55px;height:1px;background:#545454"></div>
<svg class="a" style="left:19px;top:364px" width="27" height="27"><rect x="0.5" y="0.5" width="26" height="26" fill="#f6f6f6" stroke="#333"/><path d="M1 26L26 1" stroke="#e0401e" stroke-width="2.5"/><rect x="4" y="4" width="19" height="19" fill="none" stroke="#ccc"/></svg>
<div class="a" style="left:8px;top:352px;width:26px;height:26px;background:#fbfbfb;border:1px solid #2a2a2a"></div>
<div class="a" style="left:11px;top:350px;font-family:'Liberation Serif';font-size:25px;line-height:28px;color:#d9532a;font-weight:bold;-webkit-text-stroke:1px #d9532a">T</div>
<svg class="a" style="left:37px;top:350px" width="12" height="11"><path d="M2 9V3h7M7 1l2 2-2 2M2 9l-1.5-2M2 9l1.5-2" stroke="#ddd" fill="none"/></svg>
<svg class="a" style="left:5px;top:383px" width="12" height="12"><rect x="4" y="4" width="7" height="7" fill="#222" stroke="#ddd"/><rect x="1" y="1" width="7" height="7" fill="#ddd" stroke="#222"/><path d="M1 8l7-7" stroke="#e0401e"/></svg>
<div class="a" style="left:11px;top:398px;width:10px;height:10px;background:#5a5a5a;border:1px solid #777"></div>
<div class="a" style="left:29px;top:395px;width:18px;height:18px;background:#2c2c2c"></div>
<div class="a" style="left:33px;top:396px;font-family:'Liberation Serif';font-size:14px;line-height:16px;color:#eee;font-weight:bold">T</div>
<div class="a" style="left:3px;top:418px;width:19px;height:18px;background:#2c2c2c"></div>
<div class="a" style="left:7px;top:422px;width:11px;height:11px;background:#e05a2c"></div>
<svg class="a" style="left:23px;top:421px" width="9" height="11"><defs><linearGradient id="tg2"><stop offset="0" stop-color="#eee"/><stop offset="1" stop-color="#666"/></linearGradient></defs><rect width="9" height="11" fill="url(#tg2)"/></svg>
<svg class="a" style="left:38px;top:421px" width="12" height="12"><rect x="0" y="0" width="10" height="10" fill="#f4f4f4"/><path d="M0 10L10 0" stroke="#e0401e" stroke-width="1.6"/><path d="M11 12h-3l3-3z" fill="#ccc"/></svg>
<div class="a" style="left:0;top:438px;width:55px;height:1px;background:#383838"></div>
<div class="a" style="left:0;top:439px;width:55px;height:1px;background:#545454"></div>
<div class="a" style="left:3px;top:440px;width:24px;height:20px;background:#2c2c2c"></div>
<svg class="a" style="left:8px;top:444px" width="15" height="13"><rect x="0.5" y="0.5" width="14" height="12" fill="none" stroke="#e6e6e6"/><path d="M1 3h13" stroke="#e6e6e6"/><rect x="4" y="6" width="4" height="3" fill="#e6e6e6"/><rect x="8" y="8" width="3" height="3" fill="#e6e6e6"/></svg>
<svg class="a" style="left:34px;top:443px" width="17" height="16"><rect x="0.5" y="0.5" width="13" height="12" fill="none" stroke="#d6d6d6"/><path d="M1 3h13" stroke="#d6d6d6"/><path d="M16 15h-3l3-3z" fill="#ccc"/></svg>
<div class="a" style="left:56px;top:81px;width:1697px;height:19px;background:#2f2f2f;border-top:1px solid #242424"></div>
<div class="a" style="left:56px;top:82px;width:235px;height:18px;background:#383838;border-right:1px solid #262626"></div>
<div class="a" style="left:292px;top:82px;width:209px;height:18px;background:#474747"></div>
<div class="a" style="left:67px;top:83px;font-size:13px;line-height:14px;color:#bbb">×</div>
<div class="a" style="left:82px;top:85px;font-size:10.6px;line-height:13px;color:#a8a8a8;font-weight:bold;white-space:nowrap">*Fotoratgeber_Buchcover.indd @ 200 %</div>
<div class="a" style="left:301px;top:83px;font-size:13px;line-height:14px;color:#ddd">×</div>
<div class="a" style="left:316px;top:85px;font-size:10.8px;line-height:13px;color:#f0f0f0;font-weight:bold;white-space:nowrap">*Fotoratgeber_Inhalt.indd @ 142 %</div>
<div class="a" style="left:56px;top:100px;width:1680px;height:17px;background:#1d1d1d;overflow:hidden">
<div class="a" style="left:18px;top:0;width:30px;height:17px;overflow:hidden"><div class="a" style="left:-3.8px;top:2px;font-size:10px;line-height:11px;color:#cfcfcf">100</div></div>
<div class="a" style="left:18.4px;top:14px;width:1px;height:3px;background:#bdbdbd"></div>
<div class="a" style="left:23.5px;top:14px;width:1px;height:3px;background:#bdbdbd"></div>
<div class="a" style="left:28.7px;top:14px;width:1px;height:3px;background:#bdbdbd"></div>
<div class="a" style="left:33.8px;top:14px;width:1px;height:3px;background:#bdbdbd"></div>
<div class="a" style="left:38.9px;top:11px;width:1px;height:6px;background:#bdbdbd"></div>
<div class="a" style="left:44.1px;top:14px;width:1px;height:3px;background:#bdbdbd"></div>
<div class="a" style="left:49.2px;top:14px;width:1px;height:3px;background:#bdbdbd"></div>
<div class="a" style="left:54.4px;top:14px;width:1px;height:3px;background:#bdbdbd"></div>
<div class="a" style="left:59.5px;top:14px;width:1px;height:3px;background:#bdbdbd"></div>
<div class="a" style="left:64.7px;top:0px;width:1px;height:17px;background:#bdbdbd"></div>
<div class="a" style="left:66.7px;top:2px;font-size:10px;line-height:11px;color:#cfcfcf">110</div>
<div class="a" style="left:69.8px;top:14px;width:1px;height:3px;background:#bdbdbd"></div>
<div class="a" style="left:74.9px;top:14px;width:1px;height:3px;background:#bdbdbd"></div>
<div class="a" style="left:80.1px;top:14px;width:1px;height:3px;background:#bdbdbd"></div>
<div class="a" style="left:85.2px;top:14px;width:1px;height:3px;background:#bdbdbd"></div>
<div class="a" style="left:90.4px;top:11px;width:1px;height:6px;background:#bdbdbd"></div>
<div class="a" style="left:95.5px;top:14px;width:1px;height:3px;background:#bdbdbd"></div>
<div class="a" style="left:100.7px;top:14px;width:1px;height:3px;background:#bdbdbd"></div>
<div class="a" style="left:105.8px;top:14px;width:1px;height:3px;background:#bdbdbd"></div>
<div class="a" style="left:111.0px;top:14px;width:1px;height:3px;background:#bdbdbd"></div>
<div class="a" style="left:116.1px;top:0px;width:1px;height:17px;background:#bdbdbd"></div>
<div class="a" style="left:118.1px;top:2px;font-size:10px;line-height:11px;color:#cfcfcf">120</div>
<div class="a" style="left:121.2px;top:14px;width:1px;height:3px;background:#bdbdbd"></div>
<div class="a" style="left:126.4px;top:14px;width:1px;height:3px;background:#bdbdbd"></div>
<div class="a" style="left:131.5px;top:14px;width:1px;height:3px;background:#bdbdbd"></div>
<div class="a" style="left:136.7px;top:14px;width:1px;height:3px;background:#bdbdbd"></div>
<div class="a" style="left:141.8px;top:11px;width:1px;height:6px;background:#bdbdbd"></div>
<div class="a" style="left:147.0px;top:14px;width:1px;height:3px;background:#bdbdbd"></div>
<div class="a" style="left:152.1px;top:14px;width:1px;height:3px;background:#bdbdbd"></div>
<div class="a" style="left:157.3px;top:14px;width:1px;height:3px;background:#bdbdbd"></div>
<div class="a" style="left:162.4px;top:14px;width:1px;height:3px;background:#bdbdbd"></div>
<div class="a" style="left:167.5px;top:0px;width:1px;height:17px;background:#bdbdbd"></div>
<div class="a" style="left:169.5px;top:2px;font-size:10px;line-height:11px;color:#cfcfcf">130</div>
<div class="a" style="left:172.7px;top:14px;width:1px;height:3px;background:#bdbdbd"></div>
<div class="a" style="left:177.8px;top:14px;width:1px;height:3px;background:#bdbdbd"></div>
<div class="a" style="left:183.0px;top:14px;width:1px;height:3px;background:#bdbdbd"></div>
<div class="a" style="left:188.1px;top:14px;width:1px;height:3px;background:#bdbdbd"></div>
<div class="a" style="left:193.3px;top:11px;width:1px;height:6px;background:#bdbdbd"></div>
<div class="a" style="left:198.4px;top:14px;width:1px;height:3px;background:#bdbdbd"></div>
<div class="a" style="left:203.5px;top:14px;width:1px;height:3px;background:#bdbdbd"></div>
<div class="a" style="left:208.7px;top:14px;width:1px;height:3px;background:#bdbdbd"></div>
<div class="a" style="left:213.8px;top:14px;width:1px;height:3px;background:#bdbdbd"></div>
<div class="a" style="left:219.0px;top:0px;width:1px;height:17px;background:#bdbdbd"></div>
<div class="a" style="left:221.0px;top:2px;font-size:10px;line-height:11px;color:#cfcfcf">140</div>
<div class="a" style="left:224.1px;top:14px;width:1px;height:3px;background:#bdbdbd"></div>
<div class="a" style="left:229.3px;top:14px;width:1px;height:3px;background:#bdbdbd"></div>
<div class="a" style="left:234.4px;top:14px;width:1px;height:3px;background:#bdbdbd"></div>
<div class="a" style="left:239.6px;top:14px;width:1px;height:3px;background:#bdbdbd"></div>
<div class="a" style="left:244.7px;top:11px;width:1px;height:6px;background:#bdbdbd"></div>
<div class="a" style="left:249.8px;top:14px;width:1px;height:3px;background:#bdbdbd"></div>
<div class="a" style="left:255.0px;top:14px;width:1px;height:3px;background:#bdbdbd"></div>
<div class="a" style="left:260.1px;top:14px;width:1px;height:3px;background:#bdbdbd"></div>
<div class="a" style="left:265.3px;top:14px;width:1px;height:3px;background:#bdbdbd"></div>
<div class="a" style="left:270.4px;top:0px;width:1px;height:17px;background:#bdbdbd"></div>
<div class="a" style="left:272.4px;top:2px;font-size:10px;line-height:11px;color:#cfcfcf">150</div>
<div class="a" style="left:275.6px;top:14px;width:1px;height:3px;background:#bdbdbd"></div>
<div class="a" style="left:280.7px;top:14px;width:1px;height:3px;background:#bdbdbd"></div>
<div class="a" style="left:285.9px;top:14px;width:1px;height:3px;background:#bdbdbd"></div>
<div class="a" style="left:291.0px;top:14px;width:1px;height:3px;background:#bdbdbd"></div>
<div class="a" style="left:296.1px;top:11px;width:1px;height:6px;background:#bdbdbd"></div>
<div class="a" style="left:301.3px;top:14px;width:1px;height:3px;background:#bdbdbd"></div>
<div class="a" style="left:306.4px;top:14px;width:1px;height:3px;background:#bdbdbd"></div>
<div class="a" style="left:311.6px;top:14px;width:1px;height:3px;background:#bdbdbd"></div>
<div class="a" style="left:316.7px;top:14px;width:1px;height:3px;background:#bdbdbd"></div>
<div class="a" style="left:321.9px;top:0px;width:1px;height:17px;background:#bdbdbd"></div>
<div class="a" style="left:323.9px;top:2px;font-size:10px;line-height:11px;color:#cfcfcf">160</div>
<div class="a" style="left:327.0px;top:14px;width:1px;height:3px;background:#bdbdbd"></div>
<div class="a" style="left:332.1px;top:14px;width:1px;height:3px;background:#bdbdbd"></div>
<div class="a" style="left:337.3px;top:14px;width:1px;height:3px;background:#bdbdbd"></div>
<div class="a" style="left:342.4px;top:14px;width:1px;height:3px;background:#bdbdbd"></div>
<div class="a" style="left:347.6px;top:11px;width:1px;height:6px;background:#bdbdbd"></div>
<div class="a" style="left:352.7px;top:14px;width:1px;height:3px;background:#bdbdbd"></div>
<div class="a" style="left:357.9px;top:14px;width:1px;height:3px;background:#bdbdbd"></div>
<div class="a" style="left:363.0px;top:14px;width:1px;height:3px;background:#bdbdbd"></div>
<div class="a" style="left:368.2px;top:14px;width:1px;height:3px;background:#bdbdbd"></div>
<div class="a" style="left:373.3px;top:0px;width:1px;height:17px;background:#bdbdbd"></div>
<div class="a" style="left:375.3px;top:2px;font-size:10px;line-height:11px;color:#cfcfcf">170</div>
<div class="a" style="left:378.4px;top:14px;width:1px;height:3px;background:#bdbdbd"></div>
<div class="a" style="left:383.6px;top:14px;width:1px;height:3px;background:#bdbdbd"></div>
<div class="a" style="left:388.7px;top:14px;width:1px;height:3px;background:#bdbdbd"></div>
<div class="a" style="left:393.9px;top:14px;width:1px;height:3px;background:#bdbdbd"></div>
<div class="a" style="left:399.0px;top:11px;width:1px;height:6px;background:#bdbdbd"></div>
<div class="a" style="left:404.2px;top:14px;width:1px;height:3px;background:#bdbdbd"></div>
<div class="a" style="left:409.3px;top:14px;width:1px;height:3px;background:#bdbdbd"></div>
<div class="a" style="left:414.5px;top:14px;width:1px;height:3px;background:#bdbdbd"></div>
<div class="a" style="left:419.6px;top:14px;width:1px;height:3px;background:#bdbdbd"></div>
<div class="a" style="left:424.7px;top:0px;width:1px;height:17px;background:#bdbdbd"></div>
<div class="a" style="left:426.7px;top:2px;font-size:10px;line-height:11px;color:#cfcfcf">180</div>
<div class="a" style="left:429.9px;top:14px;width:1px;height:3px;background:#bdbdbd"></div>
<div class="a" style="left:435.0px;top:14px;width:1px;height:3px;background:#bdbdbd"></div>
<div class="a" style="left:440.2px;top:14px;width:1px;height:3px;background:#bdbdbd"></div>
<div class="a" style="left:445.3px;top:14px;width:1px;height:3px;background:#bdbdbd"></div>
<div class="a" style="left:450.5px;top:11px;width:1px;height:6px;background:#bdbdbd"></div>
<div class="a" style="left:455.6px;top:14px;width:1px;height:3px;background:#bdbdbd"></div>
<div class="a" style="left:460.7px;top:14px;width:1px;height:3px;background:#bdbdbd"></div>
<div class="a" style="left:465.9px;top:14px;width:1px;height:3px;background:#bdbdbd"></div>
<div class="a" style="left:471.0px;top:14px;width:1px;height:3px;background:#bdbdbd"></div>
<div class="a" style="left:476.2px;top:0px;width:1px;height:17px;background:#bdbdbd"></div>
<div class="a" style="left:478.2px;top:2px;font-size:10px;line-height:11px;color:#cfcfcf">190</div>
<div class="a" style="left:481.3px;top:14px;width:1px;height:3px;background:#bdbdbd"></div>
<div class="a" style="left:486.5px;top:14px;width:1px;height:3px;background:#bdbdbd"></div>
<div class="a" style="left:491.6px;top:14px;width:1px;height:3px;background:#bdbdbd"></div>
<div class="a" style="left:496.8px;top:14px;width:1px;height:3px;background:#bdbdbd"></div>
<div class="a" style="left:501.9px;top:11px;width:1px;height:6px;background:#bdbdbd"></div>
<div class="a" style="left:507.0px;top:14px;width:1px;height:3px;background:#bdbdbd"></div>
<div class="a" style="left:512.2px;top:14px;width:1px;height:3px;background:#bdbdbd"></div>
<div class="a" style="left:517.3px;top:14px;width:1px;height:3px;background:#bdbdbd"></div>
<div class="a" style="left:522.5px;top:14px;width:1px;height:3px;background:#bdbdbd"></div>
<div class="a" style="left:527.6px;top:0px;width:1px;height:17px;background:#bdbdbd"></div>
<div class="a" style="left:529.6px;top:2px;font-size:10px;line-height:11px;color:#cfcfcf">200</div>
<div class="a" style="left:532.8px;top:14px;width:1px;height:3px;background:#bdbdbd"></div>
<div class="a" style="left:537.9px;top:14px;width:1px;height:3px;background:#bdbdbd"></div>
<div class="a" style="left:543.1px;top:14px;width:1px;height:3px;background:#bdbdbd"></div>
<div class="a" style="left:548.2px;top:14px;width:1px;height:3px;background:#bdbdbd"></div>
<div class="a" style="left:553.3px;top:11px;width:1px;height:6px;background:#bdbdbd"></div>
<div class="a" style="left:558.5px;top:14px;width:1px;height:3px;background:#bdbdbd"></div>
<div class="a" style="left:563.6px;top:14px;width:1px;height:3px;background:#bdbdbd"></div>
<div class="a" style="left:568.8px;top:14px;width:1px;height:3px;background:#bdbdbd"></div>
<div class="a" style="left:573.9px;top:14px;width:1px;height:3px;background:#bdbdbd"></div>
<div class="a" style="left:579.1px;top:0px;width:1px;height:17px;background:#bdbdbd"></div>
<div class="a" style="left:581.1px;top:2px;font-size:10px;line-height:11px;color:#cfcfcf">210</div>
<div class="a" style="left:584.2px;top:14px;width:1px;height:3px;background:#bdbdbd"></div>
<div class="a" style="left:589.3px;top:14px;width:1px;height:3px;background:#bdbdbd"></div>
<div class="a" style="left:594.5px;top:14px;width:1px;height:3px;background:#bdbdbd"></div>
<div class="a" style="left:599.6px;top:14px;width:1px;height:3px;background:#bdbdbd"></div>
<div class="a" style="left:604.8px;top:11px;width:1px;height:6px;background:#bdbdbd"></div>
<div class="a" style="left:609.9px;top:14px;width:1px;height:3px;background:#bdbdbd"></div>
<div class="a" style="left:615.1px;top:14px;width:1px;height:3px;background:#bdbdbd"></div>
<div class="a" style="left:620.2px;top:14px;width:1px;height:3px;background:#bdbdbd"></div>
<div class="a" style="left:625.4px;top:14px;width:1px;height:3px;background:#bdbdbd"></div>
<div class="a" style="left:630.5px;top:0px;width:1px;height:17px;background:#bdbdbd"></div>
<div class="a" style="left:632.5px;top:2px;font-size:10px;line-height:11px;color:#cfcfcf">220</div>
<div class="a" style="left:635.6px;top:14px;width:1px;height:3px;background:#bdbdbd"></div>
<div class="a" style="left:640.8px;top:14px;width:1px;height:3px;background:#bdbdbd"></div>
<div class="a" style="left:645.9px;top:14px;width:1px;height:3px;background:#bdbdbd"></div>
<div class="a" style="left:651.1px;top:14px;width:1px;height:3px;background:#bdbdbd"></div>
<div class="a" style="left:656.2px;top:11px;width:1px;height:6px;background:#bdbdbd"></div>
<div class="a" style="left:661.4px;top:14px;width:1px;height:3px;background:#bdbdbd"></div>
<div class="a" style="left:666.5px;top:14px;width:1px;height:3px;background:#bdbdbd"></div>
<div class="a" style="left:671.7px;top:14px;width:1px;height:3px;background:#bdbdbd"></div>
<div class="a" style="left:676.8px;top:14px;width:1px;height:3px;background:#bdbdbd"></div>
<div class="a" style="left:681.9px;top:0px;width:1px;height:17px;background:#bdbdbd"></div>
<div class="a" style="left:683.9px;top:2px;font-size:10px;line-height:11px;color:#cfcfcf">230</div>
<div class="a" style="left:687.1px;top:14px;width:1px;height:3px;background:#bdbdbd"></div>
<div class="a" style="left:692.2px;top:14px;width:1px;height:3px;background:#bdbdbd"></div>
<div class="a" style="left:697.4px;top:14px;width:1px;height:3px;background:#bdbdbd"></div>
<div class="a" style="left:702.5px;top:14px;width:1px;height:3px;background:#bdbdbd"></div>
<div class="a" style="left:707.7px;top:11px;width:1px;height:6px;background:#bdbdbd"></div>
<div class="a" style="left:712.8px;top:14px;width:1px;height:3px;background:#bdbdbd"></div>
<div class="a" style="left:717.9px;top:14px;width:1px;height:3px;background:#bdbdbd"></div>
<div class="a" style="left:723.1px;top:14px;width:1px;height:3px;background:#bdbdbd"></div>
<div class="a" style="left:728.2px;top:14px;width:1px;height:3px;background:#bdbdbd"></div>
<div class="a" style="left:733.4px;top:0px;width:1px;height:17px;background:#bdbdbd"></div>
<div class="a" style="left:735.4px;top:2px;font-size:10px;line-height:11px;color:#cfcfcf">240</div>
<div class="a" style="left:738.5px;top:14px;width:1px;height:3px;background:#bdbdbd"></div>
<div class="a" style="left:743.7px;top:14px;width:1px;height:3px;background:#bdbdbd"></div>
<div class="a" style="left:748.8px;top:14px;width:1px;height:3px;background:#bdbdbd"></div>
<div class="a" style="left:754.0px;top:14px;width:1px;height:3px;background:#bdbdbd"></div>
<div class="a" style="left:759.1px;top:11px;width:1px;height:6px;background:#bdbdbd"></div>
<div class="a" style="left:764.2px;top:14px;width:1px;height:3px;background:#bdbdbd"></div>
<div class="a" style="left:769.4px;top:14px;width:1px;height:3px;background:#bdbdbd"></div>
<div class="a" style="left:774.5px;top:14px;width:1px;height:3px;background:#bdbdbd"></div>
<div class="a" style="left:779.7px;top:14px;width:1px;height:3px;background:#bdbdbd"></div>
<div class="a" style="left:784.8px;top:0px;width:1px;height:17px;background:#bdbdbd"></div>
<div class="a" style="left:786.8px;top:2px;font-size:10px;line-height:11px;color:#cfcfcf">250</div>
<div class="a" style="left:790.0px;top:14px;width:1px;height:3px;background:#bdbdbd"></div>
<div class="a" style="left:795.1px;top:14px;width:1px;height:3px;background:#bdbdbd"></div>
<div class="a" style="left:800.3px;top:14px;width:1px;height:3px;background:#bdbdbd"></div>
<div class="a" style="left:805.4px;top:14px;width:1px;height:3px;background:#bdbdbd"></div>
<div class="a" style="left:810.5px;top:11px;width:1px;height:6px;background:#bdbdbd"></div>
<div class="a" style="left:815.7px;top:14px;width:1px;height:3px;background:#bdbdbd"></div>
<div class="a" style="left:820.8px;top:14px;width:1px;height:3px;background:#bdbdbd"></div>
<div class="a" style="left:826.0px;top:14px;width:1px;height:3px;background:#bdbdbd"></div>
<div class="a" style="left:831.1px;top:14px;width:1px;height:3px;background:#bdbdbd"></div>
<div class="a" style="left:836.3px;top:0px;width:1px;height:17px;background:#bdbdbd"></div>
<div class="a" style="left:838.3px;top:2px;font-size:10px;line-height:11px;color:#cfcfcf">260</div>
<div class="a" style="left:841.4px;top:14px;width:1px;height:3px;background:#bdbdbd"></div>
<div class="a" style="left:846.5px;top:14px;width:1px;height:3px;background:#bdbdbd"></div>
<div class="a" style="left:851.7px;top:14px;width:1px;height:3px;background:#bdbdbd"></div>
<div class="a" style="left:856.8px;top:14px;width:1px;height:3px;background:#bdbdbd"></div>
<div class="a" style="left:862.0px;top:11px;width:1px;height:6px;background:#bdbdbd"></div>
<div class="a" style="left:867.1px;top:14px;width:1px;height:3px;background:#bdbdbd"></div>
<div class="a" style="left:872.3px;top:14px;width:1px;height:3px;background:#bdbdbd"></div>
<div class="a" style="left:877.4px;top:14px;width:1px;height:3px;background:#bdbdbd"></div>
<div class="a" style="left:882.6px;top:14px;width:1px;height:3px;background:#bdbdbd"></div>
<div class="a" style="left:887.7px;top:0px;width:1px;height:17px;background:#bdbdbd"></div>
<div class="a" style="left:889.7px;top:2px;font-size:10px;line-height:11px;color:#cfcfcf">270</div>
<div class="a" style="left:892.8px;top:14px;width:1px;height:3px;background:#bdbdbd"></div>
<div class="a" style="left:898.0px;top:14px;width:1px;height:3px;background:#bdbdbd"></div>
<div class="a" style="left:903.1px;top:14px;width:1px;height:3px;background:#bdbdbd"></div>
<div class="a" style="left:908.3px;top:14px;width:1px;height:3px;background:#bdbdbd"></div>
<div class="a" style="left:913.4px;top:11px;width:1px;height:6px;background:#bdbdbd"></div>
<div class="a" style="left:918.6px;top:14px;width:1px;height:3px;background:#bdbdbd"></div>
<div class="a" style="left:923.7px;top:14px;width:1px;height:3px;background:#bdbdbd"></div>
<div class="a" style="left:928.9px;top:14px;width:1px;height:3px;background:#bdbdbd"></div>
<div class="a" style="left:934.0px;top:14px;width:1px;height:3px;background:#bdbdbd"></div>
<div class="a" style="left:939.1px;top:0px;width:1px;height:17px;background:#bdbdbd"></div>
<div class="a" style="left:941.1px;top:2px;font-size:10px;line-height:11px;color:#cfcfcf">280</div>
<div class="a" style="left:944.3px;top:14px;width:1px;height:3px;background:#bdbdbd"></div>
<div class="a" style="left:949.4px;top:14px;width:1px;height:3px;background:#bdbdbd"></div>
<div class="a" style="left:954.6px;top:14px;width:1px;height:3px;background:#bdbdbd"></div>
<div class="a" style="left:959.7px;top:14px;width:1px;height:3px;background:#bdbdbd"></div>
<div class="a" style="left:964.9px;top:11px;width:1px;height:6px;background:#bdbdbd"></div>
<div class="a" style="left:970.0px;top:14px;width:1px;height:3px;background:#bdbdbd"></div>
<div class="a" style="left:975.1px;top:14px;width:1px;height:3px;background:#bdbdbd"></div>
<div class="a" style="left:980.3px;top:14px;width:1px;height:3px;background:#bdbdbd"></div>
<div class="a" style="left:985.4px;top:14px;width:1px;height:3px;background:#bdbdbd"></div>
<div class="a" style="left:990.6px;top:0px;width:1px;height:17px;background:#bdbdbd"></div>
<div class="a" style="left:992.6px;top:2px;font-size:10px;line-height:11px;color:#cfcfcf">290</div>
<div class="a" style="left:995.7px;top:14px;width:1px;height:3px;background:#bdbdbd"></div>
<div class="a" style="left:1000.9px;top:14px;width:1px;height:3px;background:#bdbdbd"></div>
<div class="a" style="left:1006.0px;top:14px;width:1px;height:3px;background:#bdbdbd"></div>
<div class="a" style="left:1011.2px;top:14px;width:1px;height:3px;background:#bdbdbd"></div>
<div class="a" style="left:1016.3px;top:11px;width:1px;height:6px;background:#bdbdbd"></div>
<div class="a" style="left:1021.4px;top:14px;width:1px;height:3px;background:#bdbdbd"></div>
<div class="a" style="left:1026.6px;top:14px;width:1px;height:3px;background:#bdbdbd"></div>
<div class="a" style="left:1031.7px;top:14px;width:1px;height:3px;background:#bdbdbd"></div>
<div class="a" style="left:1036.9px;top:14px;width:1px;height:3px;background:#bdbdbd"></div>
<div class="a" style="left:1042.0px;top:0px;width:1px;height:17px;background:#bdbdbd"></div>
<div class="a" style="left:1044.0px;top:2px;font-size:10px;line-height:11px;color:#cfcfcf">300</div>
<div class="a" style="left:1047.2px;top:14px;width:1px;height:3px;background:#bdbdbd"></div>
<div class="a" style="left:1052.3px;top:14px;width:1px;height:3px;background:#bdbdbd"></div>
<div class="a" style="left:1057.5px;top:14px;width:1px;height:3px;background:#bdbdbd"></div>
<div class="a" style="left:1062.6px;top:14px;width:1px;height:3px;background:#bdbdbd"></div>
<div class="a" style="left:1067.7px;top:11px;width:1px;height:6px;background:#bdbdbd"></div>
<div class="a" style="left:1072.9px;top:14px;width:1px;height:3px;background:#bdbdbd"></div>
<div class="a" style="left:1078.0px;top:14px;width:1px;height:3px;background:#bdbdbd"></div>
<div class="a" style="left:1083.2px;top:14px;width:1px;height:3px;background:#bdbdbd"></div>
<div class="a" style="left:1088.3px;top:14px;width:1px;height:3px;background:#bdbdbd"></div>
<div class="a" style="left:1093.5px;top:0px;width:1px;height:17px;background:#bdbdbd"></div>
<div class="a" style="left:1095.5px;top:2px;font-size:10px;line-height:11px;color:#cfcfcf">310</div>
<div class="a" style="left:1098.6px;top:14px;width:1px;height:3px;background:#bdbdbd"></div>
<div class="a" style="left:1103.7px;top:14px;width:1px;height:3px;background:#bdbdbd"></div>
<div class="a" style="left:1108.9px;top:14px;width:1px;height:3px;background:#bdbdbd"></div>
<div class="a" style="left:1114.0px;top:14px;width:1px;height:3px;background:#bdbdbd"></div>
<div class="a" style="left:1119.2px;top:11px;width:1px;height:6px;background:#bdbdbd"></div>
<div class="a" style="left:1124.3px;top:14px;width:1px;height:3px;background:#bdbdbd"></div>
<div class="a" style="left:1129.5px;top:14px;width:1px;height:3px;background:#bdbdbd"></div>
<div class="a" style="left:1134.6px;top:14px;width:1px;height:3px;background:#bdbdbd"></div>
<div class="a" style="left:1139.8px;top:14px;width:1px;height:3px;background:#bdbdbd"></div>
<div class="a" style="left:1144.9px;top:0px;width:1px;height:17px;background:#bdbdbd"></div>
<div class="a" style="left:1146.9px;top:2px;font-size:10px;line-height:11px;color:#cfcfcf">320</div>
<div class="a" style="left:1150.0px;top:14px;width:1px;height:3px;background:#bdbdbd"></div>
<div class="a" style="left:1155.2px;top:14px;width:1px;height:3px;background:#bdbdbd"></div>
<div class="a" style="left:1160.3px;top:14px;width:1px;height:3px;background:#bdbdbd"></div>
<div class="a" style="left:1165.5px;top:14px;width:1px;height:3px;background:#bdbdbd"></div>
<div class="a" style="left:1170.6px;top:11px;width:1px;height:6px;background:#bdbdbd"></div>
<div class="a" style="left:1175.8px;top:14px;width:1px;height:3px;background:#bdbdbd"></div>
<div class="a" style="left:1180.9px;top:14px;width:1px;height:3px;background:#bdbdbd"></div>
<div class="a" style="left:1186.1px;top:14px;width:1px;height:3px;background:#bdbdbd"></div>
<div class="a" style="left:1191.2px;top:14px;width:1px;height:3px;background:#bdbdbd"></div>
<div class="a" style="left:1196.3px;top:0px;width:1px;height:17px;background:#bdbdbd"></div>
<div class="a" style="left:1198.3px;top:2px;font-size:10px;line-height:11px;color:#cfcfcf">330</div>
<div class="a" style="left:1201.5px;top:14px;width:1px;height:3px;background:#bdbdbd"></div>
<div class="a" style="left:1206.6px;top:14px;width:1px;height:3px;background:#bdbdbd"></div>
<div class="a" style="left:1211.8px;top:14px;width:1px;height:3px;background:#bdbdbd"></div>
<div class="a" style="left:1216.9px;top:14px;width:1px;height:3px;background:#bdbdbd"></div>
<div class="a" style="left:1222.1px;top:11px;width:1px;height:6px;background:#bdbdbd"></div>
<div class="a" style="left:1227.2px;top:14px;width:1px;height:3px;background:#bdbdbd"></div>
<div class="a" style="left:1232.3px;top:14px;width:1px;height:3px;background:#bdbdbd"></div>
<div class="a" style="left:1237.5px;top:14px;width:1px;height:3px;background:#bdbdbd"></div>
<div class="a" style="left:1242.6px;top:14px;width:1px;height:3px;background:#bdbdbd"></div>
<div class="a" style="left:1247.8px;top:0px;width:1px;height:17px;background:#bdbdbd"></div>
<div class="a" style="left:1249.8px;top:2px;font-size:10px;line-height:11px;color:#cfcfcf">340</div>
<div class="a" style="left:1252.9px;top:14px;width:1px;height:3px;background:#bdbdbd"></div>
<div class="a" style="left:1258.1px;top:14px;width:1px;height:3px;background:#bdbdbd"></div>
<div class="a" style="left:1263.2px;top:14px;width:1px;height:3px;background:#bdbdbd"></div>
<div class="a" style="left:1268.4px;top:14px;width:1px;height:3px;background:#bdbdbd"></div>
<div class="a" style="left:1273.5px;top:11px;width:1px;height:6px;background:#bdbdbd"></div>
<div class="a" style="left:1278.6px;top:14px;width:1px;height:3px;background:#bdbdbd"></div>
<div class="a" style="left:1283.8px;top:14px;width:1px;height:3px;background:#bdbdbd"></div>
<div class="a" style="left:1288.9px;top:14px;width:1px;height:3px;background:#bdbdbd"></div>
<div class="a" style="left:1294.1px;top:14px;width:1px;height:3px;background:#bdbdbd"></div>
<div class="a" style="left:1299.2px;top:0px;width:1px;height:17px;background:#bdbdbd"></div>
<div class="a" style="left:1301.2px;top:2px;font-size:10px;line-height:11px;color:#cfcfcf">350</div>
<div class="a" style="left:1304.4px;top:14px;width:1px;height:3px;background:#bdbdbd"></div>
<div class="a" style="left:1309.5px;top:14px;width:1px;height:3px;background:#bdbdbd"></div>
<div class="a" style="left:1314.7px;top:14px;width:1px;height:3px;background:#bdbdbd"></div>
<div class="a" style="left:1319.8px;top:14px;width:1px;height:3px;background:#bdbdbd"></div>
<div class="a" style="left:1324.9px;top:11px;width:1px;height:6px;background:#bdbdbd"></div>
<div class="a" style="left:1330.1px;top:14px;width:1px;height:3px;background:#bdbdbd"></div>
<div class="a" style="left:1335.2px;top:14px;width:1px;height:3px;background:#bdbdbd"></div>
<div class="a" style="left:1340.4px;top:14px;width:1px;height:3px;background:#bdbdbd"></div>
<div class="a" style="left:1345.5px;top:14px;width:1px;height:3px;background:#bdbdbd"></div>
<div class="a" style="left:1350.7px;top:0px;width:1px;height:17px;background:#bdbdbd"></div>
<div class="a" style="left:1352.7px;top:2px;font-size:10px;line-height:11px;color:#cfcfcf">360</div>
<div class="a" style="left:1355.8px;top:14px;width:1px;height:3px;background:#bdbdbd"></div>
<div class="a" style="left:1360.9px;top:14px;width:1px;height:3px;background:#bdbdbd"></div>
<div class="a" style="left:1366.1px;top:14px;width:1px;height:3px;background:#bdbdbd"></div>
<div class="a" style="left:1371.2px;top:14px;width:1px;height:3px;background:#bdbdbd"></div>
<div class="a" style="left:1376.4px;top:11px;width:1px;height:6px;background:#bdbdbd"></div>
<div class="a" style="left:1381.5px;top:14px;width:1px;height:3px;background:#bdbdbd"></div>
<div class="a" style="left:1386.7px;top:14px;width:1px;height:3px;background:#bdbdbd"></div>
<div class="a" style="left:1391.8px;top:14px;width:1px;height:3px;background:#bdbdbd"></div>
<div class="a" style="left:1397.0px;top:14px;width:1px;height:3px;background:#bdbdbd"></div>
<div class="a" style="left:1402.1px;top:0px;width:1px;height:17px;background:#bdbdbd"></div>
<div class="a" style="left:1404.1px;top:2px;font-size:10px;line-height:11px;color:#cfcfcf">370</div>
<div class="a" style="left:1407.2px;top:14px;width:1px;height:3px;background:#bdbdbd"></div>
<div class="a" style="left:1412.4px;top:14px;width:1px;height:3px;background:#bdbdbd"></div>
<div class="a" style="left:1417.5px;top:14px;width:1px;height:3px;background:#bdbdbd"></div>
<div class="a" style="left:1422.7px;top:14px;width:1px;height:3px;background:#bdbdbd"></div>
<div class="a" style="left:1427.8px;top:11px;width:1px;height:6px;background:#bdbdbd"></div>
<div class="a" style="left:1433.0px;top:14px;width:1px;height:3px;background:#bdbdbd"></div>
<div class="a" style="left:1438.1px;top:14px;width:1px;height:3px;background:#bdbdbd"></div>
<div class="a" style="left:1443.3px;top:14px;width:1px;height:3px;background:#bdbdbd"></div>
<div class="a" style="left:1448.4px;top:14px;width:1px;height:3px;background:#bdbdbd"></div>
<div class="a" style="left:1453.5px;top:0px;width:1px;height:17px;background:#bdbdbd"></div>
<div class="a" style="left:1455.5px;top:2px;font-size:10px;line-height:11px;color:#cfcfcf">380</div>
<div class="a" style="left:1458.7px;top:14px;width:1px;height:3px;background:#bdbdbd"></div>
<div class="a" style="left:1463.8px;top:14px;width:1px;height:3px;background:#bdbdbd"></div>
<div class="a" style="left:1469.0px;top:14px;width:1px;height:3px;background:#bdbdbd"></div>
<div class="a" style="left:1474.1px;top:14px;width:1px;height:3px;background:#bdbdbd"></div>
<div class="a" style="left:1479.3px;top:11px;width:1px;height:6px;background:#bdbdbd"></div>
<div class="a" style="left:1484.4px;top:14px;width:1px;height:3px;background:#bdbdbd"></div>
<div class="a" style="left:1489.5px;top:14px;width:1px;height:3px;background:#bdbdbd"></div>
<div class="a" style="left:1494.7px;top:14px;width:1px;height:3px;background:#bdbdbd"></div>
<div class="a" style="left:1499.8px;top:14px;width:1px;height:3px;background:#bdbdbd"></div>
<div class="a" style="left:1505.0px;top:0px;width:1px;height:17px;background:#bdbdbd"></div>
<div class="a" style="left:1507.0px;top:2px;font-size:10px;line-height:11px;color:#cfcfcf">390</div>
<div class="a" style="left:1510.1px;top:14px;width:1px;height:3px;background:#bdbdbd"></div>
<div class="a" style="left:1515.3px;top:14px;width:1px;height:3px;background:#bdbdbd"></div>
<div class="a" style="left:1520.4px;top:14px;width:1px;height:3px;background:#bdbdbd"></div>
<div class="a" style="left:1525.6px;top:14px;width:1px;height:3px;background:#bdbdbd"></div>
<div class="a" style="left:1530.7px;top:11px;width:1px;height:6px;background:#bdbdbd"></div>
<div class="a" style="left:1535.8px;top:14px;width:1px;height:3px;background:#bdbdbd"></div>
<div class="a" style="left:1541.0px;top:14px;width:1px;height:3px;background:#bdbdbd"></div>
<div class="a" style="left:1546.1px;top:14px;width:1px;height:3px;background:#bdbdbd"></div>
<div class="a" style="left:1551.3px;top:14px;width:1px;height:3px;background:#bdbdbd"></div>
<div class="a" style="left:1556.4px;top:0px;width:1px;height:17px;background:#bdbdbd"></div>
<div class="a" style="left:1558.4px;top:2px;font-size:10px;line-height:11px;color:#cfcfcf">400</div>
<div class="a" style="left:1561.6px;top:14px;width:1px;height:3px;background:#bdbdbd"></div>
<div class="a" style="left:1566.7px;top:14px;width:1px;height:3px;background:#bdbdbd"></div>
<div class="a" style="left:1571.9px;top:14px;width:1px;height:3px;background:#bdbdbd"></div>
<div class="a" style="left:1577.0px;top:14px;width:1px;height:3px;background:#bdbdbd"></div>
<div class="a" style="left:1582.1px;top:11px;width:1px;height:6px;background:#bdbdbd"></div>
<div class="a" style="left:1587.3px;top:14px;width:1px;height:3px;background:#bdbdbd"></div>
<div class="a" style="left:1592.4px;top:14px;width:1px;height:3px;background:#bdbdbd"></div>
<div class="a" style="left:1597.6px;top:14px;width:1px;height:3px;background:#bdbdbd"></div>
<div class="a" style="left:1602.7px;top:14px;width:1px;height:3px;background:#bdbdbd"></div>
<div class="a" style="left:1607.9px;top:0px;width:1px;height:17px;background:#bdbdbd"></div>
<div class="a" style="left:1609.9px;top:2px;font-size:10px;line-height:11px;color:#cfcfcf">410</div>
<div class="a" style="left:1613.0px;top:14px;width:1px;height:3px;background:#bdbdbd"></div>
<div class="a" style="left:1618.1px;top:14px;width:1px;height:3px;background:#bdbdbd"></div>
<div class="a" style="left:1623.3px;top:14px;width:1px;height:3px;background:#bdbdbd"></div>
<div class="a" style="left:1628.4px;top:14px;width:1px;height:3px;background:#bdbdbd"></div>
<div class="a" style="left:1633.6px;top:11px;width:1px;height:6px;background:#bdbdbd"></div>
<div class="a" style="left:1638.7px;top:14px;width:1px;height:3px;background:#bdbdbd"></div>
<div class="a" style="left:1643.9px;top:14px;width:1px;height:3px;background:#bdbdbd"></div>
<div class="a" style="left:1649.0px;top:14px;width:1px;height:3px;background:#bdbdbd"></div>
<div class="a" style="left:1654.2px;top:14px;width:1px;height:3px;background:#bdbdbd"></div>
<div class="a" style="left:1659.3px;top:0px;width:1px;height:17px;background:#bdbdbd"></div>
<div class="a" style="left:1661.3px;top:2px;font-size:10px;line-height:11px;color:#cfcfcf">420</div>
<div class="a" style="left:18px;top:16px;width:1662px;height:1px;background:#9a9a9a"></div>
<div class="a" style="left:17px;top:0;width:1px;height:17px;background:#888"></div>
<div class="a" style="left:0;top:16px;width:17px;height:1px;background:#888"></div>
<div class="a" style="left:0;top:6px;width:17px;height:1px;background:repeating-linear-gradient(90deg,#999 0 1px,transparent 1px 3px)"></div>
<div class="a" style="left:9px;top:0;width:1px;height:17px;background:repeating-linear-gradient(#999 0 1px,transparent 1px 3px)"></div>
</div>
<div class="a" style="left:1736px;top:100px;width:16px;height:17px;background:#2a2a2a"></div>
<div class="a" style="left:56px;top:117px;width:17px;height:850px;background:#1d1d1d;overflow:hidden">
<div class="a" style="left:14px;top:1.1px;width:3px;height:1px;background:#bdbdbd"></div>
<div class="a" style="left:14px;top:6.3px;width:3px;height:1px;background:#bdbdbd"></div>
<div class="a" style="left:0px;top:11.4px;width:17px;height:1px;background:#bdbdbd"></div>
<div class="a" style="left:3px;top:13.4px;font-size:9.5px;line-height:9px;color:#cfcfcf;text-align:center;width:8px">1<br>4<br>0</div>
<div class="a" style="left:14px;top:16.5px;width:3px;height:1px;background:#bdbdbd"></div>
<div class="a" style="left:14px;top:21.7px;width:3px;height:1px;background:#bdbdbd"></div>
<div class="a" style="left:14px;top:26.8px;width:3px;height:1px;background:#bdbdbd"></div>
<div class="a" style="left:14px;top:32.0px;width:3px;height:1px;background:#bdbdbd"></div>
<div class="a" style="left:11px;top:37.1px;width:6px;height:1px;background:#bdbdbd"></div>
<div class="a" style="left:14px;top:42.3px;width:3px;height:1px;background:#bdbdbd"></div>
<div class="a" style="left:14px;top:47.4px;width:3px;height:1px;background:#bdbdbd"></div>
<div class="a" style="left:14px;top:52.6px;width:3px;height:1px;background:#bdbdbd"></div>
<div class="a" style="left:14px;top:57.7px;width:3px;height:1px;background:#bdbdbd"></div>
<div class="a" style="left:0px;top:62.8px;width:17px;height:1px;background:#bdbdbd"></div>
<div class="a" style="left:3px;top:64.8px;font-size:9.5px;line-height:9px;color:#cfcfcf;text-align:center;width:8px">1<br>5<br>0</div>
<div class="a" style="left:14px;top:68.0px;width:3px;height:1px;background:#bdbdbd"></div>
<div class="a" style="left:14px;top:73.1px;width:3px;height:1px;background:#bdbdbd"></div>
<div class="a" style="left:14px;top:78.3px;width:3px;height:1px;background:#bdbdbd"></div>
<div class="a" style="left:14px;top:83.4px;width:3px;height:1px;background:#bdbdbd"></div>
<div class="a" style="left:11px;top:88.6px;width:6px;height:1px;background:#bdbdbd"></div>
<div class="a" style="left:14px;top:93.7px;width:3px;height:1px;background:#bdbdbd"></div>
<div class="a" style="left:14px;top:98.8px;width:3px;height:1px;background:#bdbdbd"></div>
<div class="a" style="left:14px;top:104.0px;width:3px;height:1px;background:#bdbdbd"></div>
<div class="a" style="left:14px;top:109.1px;width:3px;height:1px;background:#bdbdbd"></div>
<div class="a" style="left:0px;top:114.3px;width:17px;height:1px;background:#bdbdbd"></div>
<div class="a" style="left:3px;top:116.3px;font-size:9.5px;line-height:9px;color:#cfcfcf;text-align:center;width:8px">1<br>6<br>0</div>
<div class="a" style="left:14px;top:119.4px;width:3px;height:1px;background:#bdbdbd"></div>
<div class="a" style="left:14px;top:124.6px;width:3px;height:1px;background:#bdbdbd"></div>
<div class="a" style="left:14px;top:129.7px;width:3px;height:1px;background:#bdbdbd"></div>
<div class="a" style="left:14px;top:134.9px;width:3px;height:1px;background:#bdbdbd"></div>
<div class="a" style="left:11px;top:140.0px;width:6px;height:1px;background:#bdbdbd"></div>
<div class="a" style="left:14px;top:145.1px;width:3px;height:1px;background:#bdbdbd"></div>
<div class="a" style="left:14px;top:150.3px;width:3px;height:1px;background:#bdbdbd"></div>
<div class="a" style="left:14px;top:155.4px;width:3px;height:1px;background:#bdbdbd"></div>
<div class="a" style="left:14px;top:160.6px;width:3px;height:1px;background:#bdbdbd"></div>
<div class="a" style="left:0px;top:165.7px;width:17px;height:1px;background:#bdbdbd"></div>
<div class="a" style="left:3px;top:167.7px;font-size:9.5px;line-height:9px;color:#cfcfcf;text-align:center;width:8px">1<br>7<br>0</div>
<div class="a" style="left:14px;top:170.9px;width:3px;height:1px;background:#bdbdbd"></div>
<div class="a" style="left:14px;top:176.0px;width:3px;height:1px;background:#bdbdbd"></div>
<div class="a" style="left:14px;top:181.2px;width:3px;height:1px;background:#bdbdbd"></div>
<div class="a" style="left:14px;top:186.3px;width:3px;height:1px;background:#bdbdbd"></div>
<div class="a" style="left:11px;top:191.4px;width:6px;height:1px;background:#bdbdbd"></div>
<div class="a" style="left:14px;top:196.6px;width:3px;height:1px;background:#bdbdbd"></div>
<div class="a" style="left:14px;top:201.7px;width:3px;height:1px;background:#bdbdbd"></div>
<div class="a" style="left:14px;top:206.9px;width:3px;height:1px;background:#bdbdbd"></div>
<div class="a" style="left:14px;top:212.0px;width:3px;height:1px;background:#bdbdbd"></div>
<div class="a" style="left:0px;top:217.2px;width:17px;height:1px;background:#bdbdbd"></div>
<div class="a" style="left:3px;top:219.2px;font-size:9.5px;line-height:9px;color:#cfcfcf;text-align:center;width:8px">1<br>8<br>0</div>
<div class="a" style="left:14px;top:222.3px;width:3px;height:1px;background:#bdbdbd"></div>
<div class="a" style="left:14px;top:227.4px;width:3px;height:1px;background:#bdbdbd"></div>
<div class="a" style="left:14px;top:232.6px;width:3px;height:1px;background:#bdbdbd"></div>
<div class="a" style="left:14px;top:237.7px;width:3px;height:1px;background:#bdbdbd"></div>
<div class="a" style="left:11px;top:242.9px;width:6px;height:1px;background:#bdbdbd"></div>
<div class="a" style="left:14px;top:248.0px;width:3px;height:1px;background:#bdbdbd"></div>
<div class="a" style="left:14px;top:253.2px;width:3px;height:1px;background:#bdbdbd"></div>
<div class="a" style="left:14px;top:258.3px;width:3px;height:1px;background:#bdbdbd"></div>
<div class="a" style="left:14px;top:263.5px;width:3px;height:1px;background:#bdbdbd"></div>
<div class="a" style="left:0px;top:268.6px;width:17px;height:1px;background:#bdbdbd"></div>
<div class="a" style="left:3px;top:270.6px;font-size:9.5px;line-height:9px;color:#cfcfcf;text-align:center;width:8px">1<br>9<br>0</div>
<div class="a" style="left:14px;top:273.7px;width:3px;height:1px;background:#bdbdbd"></div>
<div class="a" style="left:14px;top:278.9px;width:3px;height:1px;background:#bdbdbd"></div>
<div class="a" style="left:14px;top:284.0px;width:3px;height:1px;background:#bdbdbd"></div>
<div class="a" style="left:14px;top:289.2px;width:3px;height:1px;background:#bdbdbd"></div>
<div class="a" style="left:11px;top:294.3px;width:6px;height:1px;background:#bdbdbd"></div>
<div class="a" style="left:14px;top:299.5px;width:3px;height:1px;background:#bdbdbd"></div>
<div class="a" style="left:14px;top:304.6px;width:3px;height:1px;background:#bdbdbd"></div>
<div class="a" style="left:14px;top:309.8px;width:3px;height:1px;background:#bdbdbd"></div>
<div class="a" style="left:14px;top:314.9px;width:3px;height:1px;background:#bdbdbd"></div>
<div class="a" style="left:0px;top:320.0px;width:17px;height:1px;background:#bdbdbd"></div>
<div class="a" style="left:3px;top:322.0px;font-size:9.5px;line-height:9px;color:#cfcfcf;text-align:center;width:8px">2<br>0<br>0</div>
<div class="a" style="left:14px;top:325.2px;width:3px;height:1px;background:#bdbdbd"></div>
<div class="a" style="left:14px;top:330.3px;width:3px;height:1px;background:#bdbdbd"></div>
<div class="a" style="left:14px;top:335.5px;width:3px;height:1px;background:#bdbdbd"></div>
<div class="a" style="left:14px;top:340.6px;width:3px;height:1px;background:#bdbdbd"></div>
<div class="a" style="left:11px;top:345.8px;width:6px;height:1px;background:#bdbdbd"></div>
<div class="a" style="left:14px;top:350.9px;width:3px;height:1px;background:#bdbdbd"></div>
<div class="a" style="left:14px;top:356.0px;width:3px;height:1px;background:#bdbdbd"></div>
<div class="a" style="left:14px;top:361.2px;width:3px;height:1px;background:#bdbdbd"></div>
<div class="a" style="left:14px;top:366.3px;width:3px;height:1px;background:#bdbdbd"></div>
<div class="a" style="left:0px;top:371.5px;width:17px;height:1px;background:#bdbdbd"></div>
<div class="a" style="left:3px;top:373.5px;font-size:9.5px;line-height:9px;color:#cfcfcf;text-align:center;width:8px">2<br>1<br>0</div>
<div class="a" style="left:14px;top:376.6px;width:3px;height:1px;background:#bdbdbd"></div>
<div class="a" style="left:14px;top:381.8px;width:3px;height:1px;background:#bdbdbd"></div>
<div class="a" style="left:14px;top:386.9px;width:3px;height:1px;background:#bdbdbd"></div>
<div class="a" style="left:14px;top:392.1px;width:3px;height:1px;background:#bdbdbd"></div>
<div class="a" style="left:11px;top:397.2px;width:6px;height:1px;background:#bdbdbd"></div>
<div class="a" style="left:14px;top:402.3px;width:3px;height:1px;background:#bdbdbd"></div>
<div class="a" style="left:14px;top:407.5px;width:3px;height:1px;background:#bdbdbd"></div>
<div class="a" style="left:14px;top:412.6px;width:3px;height:1px;background:#bdbdbd"></div>
<div class="a" style="left:14px;top:417.8px;width:3px;height:1px;background:#bdbdbd"></div>
<div class="a" style="left:0px;top:422.9px;width:17px;height:1px;background:#bdbdbd"></div>
<div class="a" style="left:3px;top:424.9px;font-size:9.5px;line-height:9px;color:#cfcfcf;text-align:center;width:8px">2<br>2<br>0</div>
<div class="a" style="left:14px;top:428.1px;width:3px;height:1px;background:#bdbdbd"></div>
<div class="a" style="left:14px;top:433.2px;width:3px;height:1px;background:#bdbdbd"></div>
<div class="a" style="left:14px;top:438.4px;width:3px;height:1px;background:#bdbdbd"></div>
<div class="a" style="left:14px;top:443.5px;width:3px;height:1px;background:#bdbdbd"></div>
<div class="a" style="left:11px;top:448.6px;width:6px;height:1px;background:#bdbdbd"></div>
<div class="a" style="left:14px;top:453.8px;width:3px;height:1px;background:#bdbdbd"></div>
<div class="a" style="left:14px;top:458.9px;width:3px;height:1px;background:#bdbdbd"></div>
<div class="a" style="left:14px;top:464.1px;width:3px;height:1px;background:#bdbdbd"></div>
<div class="a" style="left:14px;top:469.2px;width:3px;height:1px;background:#bdbdbd"></div>
<div class="a" style="left:0px;top:474.4px;width:17px;height:1px;background:#bdbdbd"></div>
<div class="a" style="left:3px;top:476.4px;font-size:9.5px;line-height:9px;color:#cfcfcf;text-align:center;width:8px">2<br>3<br>0</div>
<div class="a" style="left:14px;top:479.5px;width:3px;height:1px;background:#bdbdbd"></div>
<div class="a" style="left:14px;top:484.6px;width:3px;height:1px;background:#bdbdbd"></div>
<div class="a" style="left:14px;top:489.8px;width:3px;height:1px;background:#bdbdbd"></div>
<div class="a" style="left:14px;top:494.9px;width:3px;height:1px;background:#bdbdbd"></div>
<div class="a" style="left:11px;top:500.1px;width:6px;height:1px;background:#bdbdbd"></div>
<div class="a" style="left:14px;top:505.2px;width:3px;height:1px;background:#bdbdbd"></div>
<div class="a" style="left:14px;top:510.4px;width:3px;height:1px;background:#bdbdbd"></div>
<div class="a" style="left:14px;top:515.5px;width:3px;height:1px;background:#bdbdbd"></div>
<div class="a" style="left:14px;top:520.7px;width:3px;height:1px;background:#bdbdbd"></div>
<div class="a" style="left:0px;top:525.8px;width:17px;height:1px;background:#bdbdbd"></div>
<div class="a" style="left:3px;top:527.8px;font-size:9.5px;line-height:9px;color:#cfcfcf;text-align:center;width:8px">2<br>4<br>0</div>
<div class="a" style="left:14px;top:530.9px;width:3px;height:1px;background:#bdbdbd"></div>
<div class="a" style="left:14px;top:536.1px;width:3px;height:1px;background:#bdbdbd"></div>
<div class="a" style="left:14px;top:541.2px;width:3px;height:1px;background:#bdbdbd"></div>
<div class="a" style="left:14px;top:546.4px;width:3px;height:1px;background:#bdbdbd"></div>
<div class="a" style="left:11px;top:551.5px;width:6px;height:1px;background:#bdbdbd"></div>
<div class="a" style="left:14px;top:556.7px;width:3px;height:1px;background:#bdbdbd"></div>
<div class="a" style="left:14px;top:561.8px;width:3px;height:1px;background:#bdbdbd"></div>
<div class="a" style="left:14px;top:567.0px;width:3px;height:1px;background:#bdbdbd"></div>
<div class="a" style="left:14px;top:572.1px;width:3px;height:1px;background:#bdbdbd"></div>
<div class="a" style="left:0px;top:577.2px;width:17px;height:1px;background:#bdbdbd"></div>
<div class="a" style="left:3px;top:579.2px;font-size:9.5px;line-height:9px;color:#cfcfcf;text-align:center;width:8px">2<br>5<br>0</div>
<div class="a" style="left:14px;top:582.4px;width:3px;height:1px;background:#bdbdbd"></div>
<div class="a" style="left:14px;top:587.5px;width:3px;height:1px;background:#bdbdbd"></div>
<div class="a" style="left:14px;top:592.7px;width:3px;height:1px;background:#bdbdbd"></div>
<div class="a" style="left:14px;top:597.8px;width:3px;height:1px;background:#bdbdbd"></div>
<div class="a" style="left:11px;top:603.0px;width:6px;height:1px;background:#bdbdbd"></div>
<div class="a" style="left:14px;top:608.1px;width:3px;height:1px;background:#bdbdbd"></div>
<div class="a" style="left:14px;top:613.2px;width:3px;height:1px;background:#bdbdbd"></div>
<div class="a" style="left:14px;top:618.4px;width:3px;height:1px;background:#bdbdbd"></div>
<div class="a" style="left:14px;top:623.5px;width:3px;height:1px;background:#bdbdbd"></div>
<div class="a" style="left:0px;top:628.7px;width:17px;height:1px;background:#bdbdbd"></div>
<div class="a" style="left:3px;top:630.7px;font-size:9.5px;line-height:9px;color:#cfcfcf;text-align:center;width:8px">2<br>6<br>0</div>
<div class="a" style="left:14px;top:633.8px;width:3px;height:1px;background:#bdbdbd"></div>
<div class="a" style="left:14px;top:639.0px;width:3px;height:1px;background:#bdbdbd"></div>
<div class="a" style="left:14px;top:644.1px;width:3px;height:1px;background:#bdbdbd"></div>
<div class="a" style="left:14px;top:649.3px;width:3px;height:1px;background:#bdbdbd"></div>
<div class="a" style="left:11px;top:654.4px;width:6px;height:1px;background:#bdbdbd"></div>
<div class="a" style="left:14px;top:659.5px;width:3px;height:1px;background:#bdbdbd"></div>
<div class="a" style="left:14px;top:664.7px;width:3px;height:1px;background:#bdbdbd"></div>
<div class="a" style="left:14px;top:669.8px;width:3px;height:1px;background:#bdbdbd"></div>
<div class="a" style="left:14px;top:675.0px;width:3px;height:1px;background:#bdbdbd"></div>
<div class="a" style="left:0px;top:680.1px;width:17px;height:1px;background:#bdbdbd"></div>
<div class="a" style="left:3px;top:682.1px;font-size:9.5px;line-height:9px;color:#cfcfcf;text-align:center;width:8px">2<br>7<br>0</div>
<div class="a" style="left:14px;top:685.3px;width:3px;height:1px;background:#bdbdbd"></div>
<div class="a" style="left:14px;top:690.4px;width:3px;height:1px;background:#bdbdbd"></div>
<div class="a" style="left:14px;top:695.6px;width:3px;height:1px;background:#bdbdbd"></div>
<div class="a" style="left:14px;top:700.7px;width:3px;height:1px;background:#bdbdbd"></div>
<div class="a" style="left:11px;top:705.8px;width:6px;height:1px;background:#bdbdbd"></div>
<div class="a" style="left:14px;top:711.0px;width:3px;height:1px;background:#bdbdbd"></div>
<div class="a" style="left:14px;top:716.1px;width:3px;height:1px;background:#bdbdbd"></div>
<div class="a" style="left:14px;top:721.3px;width:3px;height:1px;background:#bdbdbd"></div>
<div class="a" style="left:14px;top:726.4px;width:3px;height:1px;background:#bdbdbd"></div>
<div class="a" style="left:0px;top:731.6px;width:17px;height:1px;background:#bdbdbd"></div>
<div class="a" style="left:3px;top:733.6px;font-size:9.5px;line-height:9px;color:#cfcfcf;text-align:center;width:8px">2<br>8<br>0</div>
<div class="a" style="left:14px;top:736.7px;width:3px;height:1px;background:#bdbdbd"></div>
<div class="a" style="left:14px;top:741.8px;width:3px;height:1px;background:#bdbdbd"></div>
<div class="a" style="left:14px;top:747.0px;width:3px;height:1px;background:#bdbdbd"></div>
<div class="a" style="left:14px;top:752.1px;width:3px;height:1px;background:#bdbdbd"></div>
<div class="a" style="left:11px;top:757.3px;width:6px;height:1px;background:#bdbdbd"></div>
<div class="a" style="left:14px;top:762.4px;width:3px;height:1px;background:#bdbdbd"></div>
<div class="a" style="left:14px;top:767.6px;width:3px;height:1px;background:#bdbdbd"></div>
<div class="a" style="left:14px;top:772.7px;width:3px;height:1px;background:#bdbdbd"></div>
<div class="a" style="left:14px;top:777.9px;width:3px;height:1px;background:#bdbdbd"></div>
<div class="a" style="left:0px;top:783.0px;width:17px;height:1px;background:#bdbdbd"></div>
<div class="a" style="left:3px;top:785.0px;font-size:9.5px;line-height:9px;color:#cfcfcf;text-align:center;width:8px">2<br>9<br>0</div>
<div class="a" style="left:14px;top:788.1px;width:3px;height:1px;background:#bdbdbd"></div>
<div class="a" style="left:14px;top:793.3px;width:3px;height:1px;background:#bdbdbd"></div>
<div class="a" style="left:14px;top:798.4px;width:3px;height:1px;background:#bdbdbd"></div>
<div class="a" style="left:14px;top:803.6px;width:3px;height:1px;background:#bdbdbd"></div>
<div class="a" style="left:11px;top:808.7px;width:6px;height:1px;background:#bdbdbd"></div>
<div class="a" style="left:14px;top:813.9px;width:3px;height:1px;background:#bdbdbd"></div>
<div class="a" style="left:14px;top:819.0px;width:3px;height:1px;background:#bdbdbd"></div>
<div class="a" style="left:14px;top:824.2px;width:3px;height:1px;background:#bdbdbd"></div>
<div class="a" style="left:14px;top:829.3px;width:3px;height:1px;background:#bdbdbd"></div>
<div class="a" style="left:0px;top:834.4px;width:17px;height:1px;background:#bdbdbd"></div>
<div class="a" style="left:3px;top:836.4px;font-size:9.5px;line-height:9px;color:#cfcfcf;text-align:center;width:8px">3<br>0<br>0</div>
<div class="a" style="left:14px;top:839.6px;width:3px;height:1px;background:#bdbdbd"></div>
<div class="a" style="left:14px;top:844.7px;width:3px;height:1px;background:#bdbdbd"></div>
<div class="a" style="left:14px;top:849.9px;width:3px;height:1px;background:#bdbdbd"></div>
</div>
<div id="paste" class="a"><div class="a" style="left:-73px;top:-117px;width:1920px;height:983px">
<div class="a" style="left:73px;top:117px;width:1644px;height:820px;background:#fff"></div>
<div class="a" style="left:73px;top:936px;width:1645px;height:2px;background:#000"></div>
<div class="a" style="left:1716px;top:100px;width:2px;height:838px;background:#000"></div>
<div class="a" style="left:73px;top:946px;width:1655px;height:1px;background:#d06070"></div>
<div class="a" style="left:1726px;top:100px;width:1px;height:847px;background:#d06070"></div>
<svg class="a" style="left:73px;top:117px" width="1604" height="133" viewBox="73 117 1604 133">
<defs>
<filter id="bl" x="-20%" y="-50%" width="140%" height="200%"><feGaussianBlur stdDeviation="9"/></filter>
<filter id="bl5" x="-50%" y="-50%" width="200%" height="200%"><feGaussianBlur stdDeviation="5"/></filter>
<filter id="bl2" x="-20%" y="-50%" width="140%" height="200%"><feGaussianBlur stdDeviation="3"/></filter>
<linearGradient id="lg1" x1="0" x2="1"><stop offset="0" stop-color="#efd6b8"/><stop offset="1" stop-color="#e2bd8e"/></linearGradient>
<linearGradient id="cr" x1="0" y1="0" x2="0" y2="1"><stop offset="0" stop-color="#d9c3bb"/><stop offset="0.5" stop-color="#f2e4d6"/><stop offset="1" stop-color="#f6e6d4"/></linearGradient>
</defs>
<rect x="73" y="100" width="1604" height="170" fill="#684242"/>
<g filter="url(#bl)">
<rect x="40" y="90" width="200" height="190" fill="url(#lg1)"/>
<rect x="200" y="90" width="100" height="190" fill="#e3c195"/>
<ellipse cx="90" cy="130" rx="40" ry="40" fill="#f4e0cc"/>
<path d="M240 100 L300 100 L300 270 L270 270 Q250 210 240 100 Z" fill="#eedbb8"/>
<path d="M292 100 L318 100 L318 270 L292 270 Z" fill="#e4c8a0"/>

<rect x="312" y="90" width="24" height="190" fill="#bf9a70"/>
<rect x="334" y="90" width="30" height="190" fill="#5e3d2a"/>
<rect x="362" y="90" width="56" height="190" fill="#9a7050"/>
<rect x="378" y="90" width="24" height="190" fill="#b08868"/>
<rect x="402" y="90" width="30" height="190" fill="#62402e"/>
<rect x="430" y="90" width="26" height="120" fill="#c4a282"/>
<rect x="444" y="90" width="120" height="190" fill="#b88c6c"/>
<ellipse cx="527" cy="226" rx="34" ry="16" fill="#de9060"/>
</g>
<path d="M234 104 L241 104 Q228 150 238 180 Q250 208 280 262 L236 262 Q212 230 211 190 Q212 150 234 104 Z" fill="#6a4832" filter="url(#bl5)"/>
<g filter="url(#bl2)">
<path d="M826 256 Q880 200 920 140 L918 256 Z" fill="#edd6c4"/>
<ellipse cx="697" cy="-123" rx="300" ry="407" fill="#74504f"/>
<path d="M492 112 Q650 205 780 112 Z" fill="#4e3032"/>
<path d="M492 112 Q650 207 780 112" stroke="#8e6868" stroke-width="4" fill="none"/>
<ellipse cx="672" cy="119" rx="50" ry="4" fill="#9a7478"/>
</g>
<ellipse cx="697" cy="-123" rx="300" ry="407" fill="none" stroke="#9a7474" stroke-width="3" filter="url(#bl2)"/>
<g filter="url(#bl)">
<rect x="1075" y="90" width="400" height="190" fill="url(#cr)"/>
<rect x="1100" y="90" width="110" height="190" fill="#f8eee4"/>
<rect x="1465" y="90" width="230" height="190" fill="#f2e2d2"/>
<ellipse cx="1330" cy="120" rx="170" ry="28" fill="#cbb3ab"/>
<ellipse cx="1585" cy="140" rx="45" ry="32" fill="#a07a76"/>
<ellipse cx="1665" cy="140" rx="28" ry="38" fill="#d9ab8c"/>
<ellipse cx="1400" cy="125" rx="130" ry="30" fill="#b89a94"/>
</g>
<rect x="1201" y="117" width="336" height="88" fill="#fff" opacity="0.32"/>
</svg>
<div class="a" style="left:73px;top:250px;width:1604px;height:1px;background:#6f8fc8"></div>
<div class="a" style="left:1201px;top:205px;width:335px;height:1px;background:#6f8fc8"></div>
<div class="a" style="left:815px;top:318px;width:721px;height:1px;background:#6f8fc8"></div>
<div class="a" style="left:815px;top:618px;width:721px;height:1px;background:#6f8fc8"></div>
<div class="a" style="left:1201px;top:124px;width:335px;text-align:center;font-family:'Liberation Serif',serif;font-style:italic;font-size:20px;line-height:26px;color:#6a7a1a;transform:scaleX(0.95);letter-spacing:-0.2px;-webkit-text-stroke:0.6px #6a7a1a">Lorem ipsum dolor sit amet, consectetur<br>adipisicing elit.&nbsp; Proin nibh augue,</div>
<div class="a" style="right:845px;top:311px;white-space:nowrap;font-family:'Liberation Serif',serif;font-style:italic;font-size:38px;line-height:46px;color:#c9593b;transform:scaleX(0.86);transform-origin:right">Praktische Details</div>
<div class="a" style="left:1062px;top:308px;width:1px;height:53px;background:#111"></div>
<div class="a body" style="right:789px;top:356.0px;transform:scaleX(0.893);transform-origin:right">dolor sit amet, consectetur adi</div>
<div class="a body" style="right:813px;top:381.4px;transform:scaleX(0.893);transform-origin:right">Proin nibh augue, suscipit a,</div>
<div class="a body" style="right:775px;top:406.9px;transform:scaleX(0.893);transform-origin:right">m lacinia in nibh augue, suscipit</div>
<div class="a body" style="right:802px;top:432.4px;transform:scaleX(0.893);transform-origin:right">iusdae conet ipiet voluptam</div>
<div class="a body" style="right:800px;top:457.8px;transform:scaleX(0.893);transform-origin:right">leosapel estium imus maior</div>
<div class="a body" style="right:806px;top:483.2px;transform:scaleX(0.893);transform-origin:right">everit arciet volorer chilles</div>
<div class="a body" style="right:786px;top:508.7px;transform:scaleX(0.893);transform-origin:right">odit lamet acipsam sunt aces a</div>
<div class="a body" style="right:772px;top:534.1px;transform:scaleX(0.893);transform-origin:right">ue sam re volut illenitibus ra cu-</div>
<div class="a body" style="right:781px;top:559.6px;transform:scaleX(0.893);transform-origin:right">nate soluptatist, ut am ese mo-</div>
<div class="a body" style="right:771px;top:585.0px;transform:scaleX(0.893);transform-origin:right">odio mintem que volupta doloria</div>
<div class="a body" style="left:1201px;top:356.0px;transform:scaleX(0.893);transform-origin:left">quos et landionem rem. Mus mincipsam qui</div>
<div class="a body" style="left:1201px;top:381.4px;transform:scaleX(0.893);transform-origin:left">restinctam aut prore veliqui dia quat exeribus</div>
<div class="a body" style="left:1201px;top:406.9px;transform:scaleX(0.893);transform-origin:left">ut harcia duciliq uistia digendi tianime omni-</div>
<div class="a body" style="left:1201px;top:432.4px;transform:scaleX(0.893);transform-origin:left">musam lat quat. Ent pres illaut re optiorem et</div>
<div class="a body" style="left:1201px;top:457.8px;transform:scaleX(0.893);transform-origin:left">idia seque nimaxim quias magnihit quae pa</div>
<div class="a body" style="left:1201px;top:483.2px;transform:scaleX(0.893);transform-origin:left">coreperum a volore nihil molupta tecabo. Ne-</div>
<div class="a body" style="left:1201px;top:508.7px;transform:scaleX(0.893);transform-origin:left">molut volorest harchil il mo tet esequia verios</div>
<div class="a body" style="left:1201px;top:534.1px;transform:scaleX(0.893);transform-origin:left">ditem fugitaeptio. Icto conem unti aliquiamus</div>
<div class="a body" style="left:1201px;top:559.6px;transform:scaleX(0.893);transform-origin:left">autaquam, quias eiusa plitam aut aut faccupt</div>
<div class="a body" style="left:1201px;top:585.0px;transform:scaleX(0.893);transform-origin:left">atusam dem ut eum nonserro.</div>
<div class="a" style="right:279px;top:870px;white-space:nowrap;font-family:'Liberation Serif',serif;font-size:14px;line-height:18px;color:#333;-webkit-text-stroke:0.2px #333">Der Zauber der Fotografie – Der ultimative Ratgeber für alle Hobby- und Profifotografen.</div>
<div id="ftfr" class="a" style="left:1137px;top:873px;width:505px;height:15px;border:1px dotted #c9c4b4"></div>
<div class="a" style="left:1654px;top:865px;width:79px;height:27px;background:#e05a2a"></div>
<div class="a" style="left:1662px;top:872px;width:30px;height:15px;border:1px dotted #f0a070"></div>
<div class="a" style="left:1717px;top:864px;width:16px;height:29px;border:1px dotted #f0a070"></div>
<div class="a" style="left:1662px;top:870px;font-size:14px;line-height:18px;color:#fff;font-weight:bold">3</div>
<div class="a" style="left:121px;top:117px;width:1px;height:689px;background:#c84ad8"></div>
<div class="a" style="left:454px;top:117px;width:1px;height:689px;background:#8844d4"></div>
<div class="a" style="left:815px;top:117px;width:1px;height:689px;background:#8844d4"></div>
<div class="a" style="left:1149px;top:117px;width:1px;height:689px;background:#8844d4"></div>
<div class="a" style="left:1201px;top:117px;width:1px;height:689px;background:#8844d4"></div>
<div class="a" style="left:1536px;top:117px;width:1px;height:689px;background:#8844d4"></div>
<div class="a" style="left:73px;top:806px;width:1464px;height:1px;background:#c84ad8"></div>
<div class="a" style="left:596px;top:117px;width:1px;height:850px;background:#72e2ee"></div>
<div class="a" style="left:676px;top:117px;width:1px;height:850px;background:#72e2ee"></div>
<div class="a" style="left:1677px;top:117px;width:1px;height:850px;background:#72e2ee"></div>
<div class="a" style="left:73px;top:895px;width:1663px;height:1px;background:#72e2ee"></div>
<div class="a" style="left:634px;top:117px;width:2px;height:820px;background:#000"></div>
</div></div>

<div class="a" style="left:1736px;top:100px;width:16px;height:867px;background:#393939;border-left:1px solid #2c2c2c"></div>
<div class="a" style="left:1740px;top:105px;width:0;height:0;border-left:5px solid transparent;border-right:5px solid transparent;border-bottom:7px solid #e8e8e8"></div>
<div class="a" style="left:1737px;top:400px;width:14px;height:516px;background:#9a9a9a;border-radius:1px"></div>
<div class="a" style="left:1740px;top:955px;width:0;height:0;border-left:5px solid transparent;border-right:5px solid transparent;border-top:7px solid #e8e8e8"></div>
<div class="a" style="left:56px;top:967px;width:470px;height:16px;background:#474747;border-top:1px solid #333"></div>
<svg class="a" style="left:75px;top:969px" width="20" height="12"><rect x="0.5" y="0.5" width="19" height="11" rx="2" fill="none" stroke="#d0d0d0"/><circle cx="6" cy="6" r="3" fill="#d0d0d0"/><path d="M12 4h5M14.5 2v8" stroke="#d0d0d0" stroke-width="1.5"/></svg>
<svg class="a" style="left:101px;top:969px" width="15" height="13"><path d="M1 4v8h11V8" stroke="#d0d0d0" fill="none" stroke-width="1.3"/><path d="M5 9c1-4 3-5 7-5M10 2l3 2-3 2" stroke="#d0d0d0" fill="none" stroke-width="1.3"/></svg>
<svg class="a" style="left:125px;top:970px" width="22" height="11"><path d="M1 1v9" stroke="#d0d0d0" stroke-width="1.5"/><path d="M8 1L3 5.5 8 10z" fill="#d0d0d0"/><path d="M20 1l-5 4.5 5 4.5z" fill="#d0d0d0"/></svg>
<div class="a" style="left:154px;top:970px;font-size:10px;line-height:12px;color:#e0e0e0">3</div>
<svg class="a" style="left:236px;top:972px" width="11" height="7"><path d="M1 1h9L5.5 6z" fill="#ddd"/></svg>
<svg class="a" style="left:255px;top:970px" width="22" height="11"><path d="M1 1l5 4.5L1 10zM11 1l5 4.5-5 4.5z" fill="#777"/><path d="M20 1v9" stroke="#777" stroke-width="1.5"/></svg>
<svg class="a" style="left:283px;top:968px" width="16" height="15"><circle cx="7" cy="7" r="6.3" fill="none" stroke="#d0d0d0" stroke-width="1.3"/><path d="M4 3h4l2 2v5H4z" fill="#d0d0d0"/><circle cx="14" cy="13" r="1" fill="#d0d0d0"/></svg>
<div class="a" style="left:310px;top:970px;font-size:9.5px;line-height:12px;color:#6e6e6e;white-space:nowrap">[Grundprofil] (Arbeitsp...</div>
<svg class="a" style="left:414px;top:972px" width="9" height="7"><path d="M1 1h7L4.5 6z" fill="#6a6a6a"/></svg>
<div class="a" style="left:432px;top:969px;width:10px;height:10px;border-radius:50%;background:#5e5e5e"></div>
<div class="a" style="left:443px;top:970px;font-size:9.8px;line-height:12px;color:#e8e8e8;white-space:nowrap">Preflight aus</div>
<svg class="a" style="left:514px;top:972px" width="9" height="7"><path d="M1 1h7L4.5 6z" fill="#ddd"/></svg>
<div class="a" style="left:525px;top:967px;width:1188px;height:16px;background:#2f2f2f;border-top:1px solid #2a2a2a"></div>
<svg class="a" style="left:528px;top:969px" width="10" height="12"><path d="M8 1L2 6l6 5z" fill="#e8e8e8"/></svg>
<div class="a" style="left:972px;top:968px;width:438px;height:15px;background:#8e8e8e"></div>
<svg class="a" style="left:1701px;top:969px" width="10" height="12"><path d="M2 1l6 5-6 5z" fill="#e8e8e8"/></svg>
<div class="a" style="left:1713px;top:967px;width:39px;height:16px;background:#3a3a3a"></div>
<svg class="a" style="left:1718px;top:969px" width="16" height="13"><rect x="0.5" y="0.5" width="14" height="11" fill="none" stroke="#ddd"/><path d="M7.5 1v10" stroke="#ddd"/></svg>
<div class="a" style="left:1738px;top:970px;width:12px;height:12px;background:repeating-linear-gradient(135deg,transparent 0 2px,#666 2px 3px)"></div>
<div class="a" style="left:1752px;top:81px;width:168px;height:902px;background:#474747;border-left:2px solid #2a2a2a"></div>
<div class="a" style="left:1752px;top:81px;width:168px;height:13px;background:#2f2f2f;border-bottom:1px solid #262626"></div>
<svg class="a" style="left:1905px;top:83px" width="10" height="9"><path d="M4 1L1 4.5 4 8zM8 1L5 4.5 8 8z" fill="#ccc"/></svg>
<div class="a" style="left:1916px;top:94px;width:4px;height:889px;background:#3a3a3a"></div>
<div class="a" style="left:1826px;top:97px;width:20px;height:4px;background:repeating-linear-gradient(90deg,#1c1c1c 0 1px,transparent 1px 2px)"></div>
<div class="a" style="left:1791px;top:111px;font-size:10.9px;line-height:14px;font-weight:bold;color:#e4e4e4;white-space:nowrap">Seiten</div>
<svg class="a" style="left:1764px;top:109px" width="20" height="18"><path d="M2 4h6v11H2zM11 4h6v11h-6z" fill="#d6d6d6"/><path d="M9.5 1v17" stroke="#d6d6d6"/><path d="M6 4l2 2M13 4l2 2" stroke="#555"/></svg>
<div class="a" style="left:1791px;top:139px;font-size:10.9px;line-height:14px;font-weight:bold;color:#e4e4e4;white-space:nowrap">Ebenen</div>
<svg class="a" style="left:1764px;top:137px" width="20" height="18"><path d="M10 1l8 5-8 5-8-5z" fill="#d6d6d6"/><path d="M2 10l8 5 8-5" stroke="#d6d6d6" stroke-width="2" fill="none"/></svg>
<div class="a" style="left:1791px;top:167px;font-size:10.9px;line-height:14px;font-weight:bold;color:#e4e4e4;white-space:nowrap">Verknüpfungen</div>
<svg class="a" style="left:1764px;top:165px" width="20" height="18"><path d="M7 5H4a4 4 0 0 0 0 8h3M12 5h3a4 4 0 0 1 0 8h-3M6 9h8" stroke="#d6d6d6" stroke-width="2" fill="none"/></svg>
<div class="a" style="left:1754px;top:189px;width:162px;height:2px;background:#2e2e2e"></div>
<div class="a" style="left:1826px;top:194px;width:20px;height:4px;background:repeating-linear-gradient(90deg,#1c1c1c 0 1px,transparent 1px 2px)"></div>
<div class="a" style="left:1791px;top:208px;font-size:10.9px;line-height:14px;font-weight:bold;color:#e4e4e4;white-space:nowrap">Farbfelder</div>
<svg class="a" style="left:1764px;top:206px" width="20" height="18"><rect x="1.5" y="3.5" width="16" height="11" fill="none" stroke="#d6d6d6"/><path d="M7 4v10M12 4v10M2 9h15" stroke="#d6d6d6"/><rect x="2" y="4" width="5" height="5" fill="#d6d6d6"/></svg>
<div class="a" style="left:1791px;top:236px;font-size:10.9px;line-height:14px;font-weight:bold;color:#e4e4e4;white-space:nowrap">Kontur</div>
<svg class="a" style="left:1764px;top:234px" width="20" height="18"><path d="M1 4h17M1 9h17M1 14h17" stroke="#d6d6d6" stroke-width="1.8"/></svg>
<div class="a" style="left:1791px;top:264px;font-size:10.9px;line-height:14px;font-weight:bold;color:#e4e4e4;white-space:nowrap">Verlauf</div>
<svg class="a" style="left:1764px;top:262px" width="20" height="18"><defs><linearGradient id="dg"><stop offset="0" stop-color="#222"/><stop offset="1" stop-color="#eee"/></linearGradient></defs><rect x="1.5" y="3.5" width="16" height="11" fill="url(#dg)" stroke="#d6d6d6"/></svg>
<div class="a" style="left:1754px;top:286px;width:162px;height:2px;background:#2e2e2e"></div>
<div class="a" style="left:1826px;top:291px;width:20px;height:4px;background:repeating-linear-gradient(90deg,#1c1c1c 0 1px,transparent 1px 2px)"></div>
<div class="a" style="left:1791px;top:305px;font-size:10.9px;line-height:14px;font-weight:bold;color:#e4e4e4;white-space:nowrap">Effekte</div>
<svg class="a" style="left:1764px;top:303px" width="20" height="18"><text x="1" y="15" font-family="Liberation Serif" font-style="italic" font-size="16" fill="#d6d6d6">fx</text></svg>
<div class="a" style="left:1754px;top:327px;width:162px;height:2px;background:#2e2e2e"></div>
<div class="a" style="left:1826px;top:332px;width:20px;height:4px;background:repeating-linear-gradient(90deg,#1c1c1c 0 1px,transparent 1px 2px)"></div>
<div class="a" style="left:1791px;top:346px;font-size:10.9px;line-height:14px;font-weight:bold;color:#e4e4e4;white-space:nowrap">Zeichenformate</div>
<svg class="a" style="left:1764px;top:344px" width="20" height="18"><rect x="1.5" y="9.5" width="6" height="6" fill="none" stroke="#d6d6d6"/><rect x="4.5" y="12.5" width="6" height="5" fill="none" stroke="#d6d6d6"/><text x="8" y="11" font-family="Liberation Sans" font-size="13" fill="#d6d6d6">A</text></svg>
<div class="a" style="left:1758px;top:369px;width:156px;height:22px;background:#2f2f2f;border-radius:2px"></div>
<div class="a" style="left:1791px;top:374px;font-size:10.9px;line-height:14px;font-weight:bold;color:#e4e4e4;white-space:nowrap">Absatzformate</div>
<svg class="a" style="left:1764px;top:372px" width="20" height="18"><rect x="1.5" y="9.5" width="6" height="6" fill="none" stroke="#d6d6d6"/><rect x="4.5" y="12.5" width="6" height="5" fill="none" stroke="#d6d6d6"/><text x="9" y="11" font-family="Liberation Sans" font-weight="bold" font-size="13" fill="#d6d6d6">¶</text></svg>
<div class="a" style="left:1791px;top:402px;font-size:10.9px;line-height:14px;font-weight:bold;color:#e4e4e4;white-space:nowrap">Objektformate</div>
<svg class="a" style="left:1764px;top:400px" width="20" height="18"><rect x="1.5" y="9.5" width="6" height="6" fill="none" stroke="#d6d6d6"/><rect x="4.5" y="12.5" width="6" height="5" fill="none" stroke="#d6d6d6"/><rect x="8" y="1" width="10" height="12" fill="#888" stroke="#d6d6d6"/></svg>
<div class="a" style="left:1754px;top:424px;width:162px;height:2px;background:#2e2e2e"></div>
<div class="a" style="left:1826px;top:428px;width:20px;height:4px;background:repeating-linear-gradient(90deg,#1c1c1c 0 1px,transparent 1px 2px)"></div>
<div class="a" style="left:1791px;top:443px;font-size:10.9px;line-height:14px;font-weight:bold;color:#e4e4e4;white-space:nowrap">Tabelle</div>
<svg class="a" style="left:1764px;top:441px" width="20" height="18"><rect x="1.5" y="2.5" width="15" height="13" fill="none" stroke="#d6d6d6"/><path d="M2 6h14M6 7v8M2 9.5h14M2 12.5h14" stroke="#d6d6d6"/></svg>
<div class="a" style="left:1791px;top:471px;font-size:10.9px;line-height:14px;font-weight:bold;color:#e4e4e4;white-space:nowrap">Tabellenformate</div>
<svg class="a" style="left:1764px;top:469px" width="20" height="18"><rect x="1.5" y="9.5" width="6" height="6" fill="none" stroke="#d6d6d6"/><rect x="4.5" y="12.5" width="6" height="5" fill="none" stroke="#d6d6d6"/><rect x="8.5" y="1.5" width="9" height="11" fill="none" stroke="#d6d6d6"/><path d="M9 4h8M9 7h8M9 10h8" stroke="#d6d6d6"/></svg>
<div class="a" style="left:1791px;top:499px;font-size:10.9px;line-height:14px;font-weight:bold;color:#e4e4e4;white-space:nowrap">Zellenformate</div>
<svg class="a" style="left:1764px;top:497px" width="20" height="18"><rect x="1.5" y="9.5" width="6" height="6" fill="none" stroke="#d6d6d6"/><rect x="4.5" y="12.5" width="6" height="5" fill="none" stroke="#d6d6d6"/><rect x="8.5" y="1.5" width="9" height="11" fill="none" stroke="#d6d6d6"/><path d="M13 2v10M9 7h8" stroke="#d6d6d6"/></svg>
<div class="a" style="left:1754px;top:521px;width:162px;height:2px;background:#2e2e2e"></div>
<div class="a" style="left:1826px;top:526px;width:20px;height:4px;background:repeating-linear-gradient(90deg,#1c1c1c 0 1px,transparent 1px 2px)"></div>
<div class="a" style="left:1791px;top:540px;font-size:10.9px;line-height:14px;font-weight:bold;color:#e4e4e4;white-space:nowrap">Datenzusammenführ...</div>
<svg class="a" style="left:1764px;top:538px" width="20" height="18"><path d="M1 6h6M5 4l2 2-2 2" stroke="#d6d6d6" fill="none" stroke-width="1.5"/><path d="M8 1h5l3 3v4" stroke="#d6d6d6" fill="none"/><circle cx="13" cy="13" r="3.5" fill="#d6d6d6"/><path d="M13 8v10M8 13h10M9.5 9.5l7 7M16.5 9.5l-7 7" stroke="#d6d6d6" stroke-width="1.2"/></svg>
<div class="a" style="left:1791px;top:568px;font-size:10.9px;line-height:14px;font-weight:bold;color:#e4e4e4;white-space:nowrap">Skripte</div>
<svg class="a" style="left:1764px;top:566px" width="20" height="18"><text x="2" y="16" font-family="Liberation Serif" font-weight="bold" font-style="italic" font-size="19" fill="#d6d6d6">S</text></svg>
<div class="a" style="left:1754px;top:590px;width:162px;height:2px;background:#2e2e2e"></div>
<div class="a" style="left:1826px;top:595px;width:20px;height:4px;background:repeating-linear-gradient(90deg,#1c1c1c 0 1px,transparent 1px 2px)"></div>
<div class="a" style="left:1791px;top:609px;font-size:10.9px;line-height:14px;font-weight:bold;color:#e4e4e4;white-space:nowrap">Glyphen</div>
<svg class="a" style="left:1764px;top:607px" width="20" height="18"><text x="1" y="16" font-family="Liberation Serif" font-style="italic" font-size="18" fill="#d6d6d6">A</text></svg>
<div class="a" style="left:1791px;top:637px;font-size:10.9px;line-height:14px;font-weight:bold;color:#e4e4e4;white-space:nowrap">Zeichen</div>
<svg class="a" style="left:1764px;top:635px" width="20" height="18"><text x="1" y="15" font-family="Liberation Sans" font-size="16" fill="#d6d6d6">A</text><path d="M16 2v15" stroke="#d6d6d6"/></svg>
<div class="a" style="left:1791px;top:665px;font-size:10.9px;line-height:14px;font-weight:bold;color:#e4e4e4;white-space:nowrap">Absatz</div>
<svg class="a" style="left:1764px;top:663px" width="20" height="18"><text x="3" y="15" font-family="Liberation Sans" font-weight="bold" font-size="16" fill="#d6d6d6">¶</text></svg>
<div class="a" style="left:1754px;top:687px;width:162px;height:2px;background:#2e2e2e"></div>
<div class="a" style="left:1544px;top:327px;width:208px;height:428px;background:#474747;border:1px solid #262626;box-shadow:0 2px 6px rgba(0,0,0,.35)"></div>
<div class="a" style="left:1545px;top:328px;width:206px;height:19px;background:#2e2e2e"></div>
<div class="a" style="left:1569px;top:328px;width:94px;height:19px;background:#474747"></div>
<div class="a" style="left:1552px;top:331px;font-size:10.8px;line-height:13px;font-weight:bold;color:#9a9a9a">Zei</div>
<svg class="a" style="left:1572px;top:331px" width="8" height="12"><path d="M1 5l3-3 3 3M1 8l3 3 3-3" stroke="#ddd" fill="none"/></svg>
<div class="a" style="left:1581px;top:331px;font-size:10.8px;line-height:13px;font-weight:bold;color:#f0f0f0">Absatzformate</div>
<div class="a" style="left:1670px;top:331px;font-size:10.8px;line-height:13px;font-weight:bold;color:#9a9a9a">Obj</div>
<svg class="a" style="left:1710px;top:333px" width="12" height="9"><path d="M1 1l4 3.5L1 8zM6 1l4 3.5L6 8z" fill="#ddd"/></svg>
<div class="a" style="left:1728px;top:331px;width:1px;height:12px;background:#555"></div>
<svg class="a" style="left:1733px;top:333px" width="16" height="9"><path d="M0 3h4l-2 2z" fill="#ddd"/><path d="M6 1h9M6 4h9M6 7h9" stroke="#ddd" stroke-width="1.2"/></svg>
<div class="a" style="left:1547px;top:352px;font-size:9.2px;line-height:13px;color:#e0e0e0">Zwischenüberschrift</div>
<svg class="a" style="left:1737px;top:349px" width="11" height="17"><path d="M7 1L2 8h4l-2 8 6-9H6z" fill="none" stroke="#d0d0d0" stroke-width="1.2"/></svg>
<div class="a" style="left:1545px;top:367px;width:206px;height:1px;background:#333"></div>
<div class="a" style="left:1545px;top:368px;width:195px;height:360px;background:#484848"></div>
<div class="a" style="left:1545px;top:368px;width:195px;height:20px;background:#484848;border-bottom:1px solid #3a3a3a;font-size:9.4px;line-height:16px;padding-top:4px;color:#e4e4e4;font-weight:normal;padding-left:32px;white-space:nowrap">[Einf. Abs.]</div>
<div class="a" style="left:1545px;top:388px;width:195px;height:20px;background:#484848;border-bottom:1px solid #3a3a3a;font-size:9.4px;line-height:16px;padding-top:4px;color:#e4e4e4;font-weight:normal;padding-left:32px;white-space:nowrap">Fließtext</div>
<div class="a" style="left:1545px;top:408px;width:195px;height:20px;background:#484848;border-bottom:1px solid #3a3a3a;font-size:9.4px;line-height:16px;padding-top:4px;color:#e4e4e4;font-weight:normal;padding-left:32px;white-space:nowrap">Seitentitel - Rubrik</div>
<div class="a" style="left:1545px;top:428px;width:195px;height:20px;background:#484848;border-bottom:1px solid #3a3a3a;font-size:9.4px;line-height:16px;padding-top:4px;color:#e4e4e4;font-weight:normal;padding-left:32px;white-space:nowrap">Seitenzahl</div>
<div class="a" style="left:1545px;top:448px;width:195px;height:20px;background:#484848;border-bottom:1px solid #3a3a3a;font-size:9.4px;line-height:16px;padding-top:4px;color:#e4e4e4;font-weight:normal;padding-left:32px;white-space:nowrap">Überschrift</div>
<div class="a" style="left:1545px;top:468px;width:195px;height:20px;background:#4b5a72;border-bottom:1px solid #3a3a3a;font-size:9.4px;line-height:16px;padding-top:4px;color:#ffffff;font-weight:bold;padding-left:32px;white-space:nowrap">Zwischenüberschrift</div>
<div class="a" style="left:1545px;top:488px;width:195px;height:20px;background:#484848;border-bottom:1px solid #3a3a3a;font-size:9.4px;line-height:16px;padding-top:4px;color:#e4e4e4;font-weight:normal;padding-left:32px;white-space:nowrap">Bildunterschrift</div>
<div class="a" style="left:1740px;top:368px;width:11px;height:360px;background:#3e3e3e"></div>
<div class="a" style="left:1742px;top:374px;width:0;height:0;border-left:3.5px solid transparent;border-right:3.5px solid transparent;border-bottom:5px solid #6a6a6a"></div>
<div class="a" style="left:1742px;top:719px;width:0;height:0;border-left:3.5px solid transparent;border-right:3.5px solid transparent;border-top:5px solid #6a6a6a"></div>
<div class="a" style="left:1545px;top:728px;width:206px;height:19px;background:#474747;border-top:1px solid #333"></div>
<svg class="a" style="left:1623px;top:731px" width="14" height="12"><path d="M1 2h5l1 2h6v7H1z" fill="#cfcfcf"/></svg>
<svg class="a" style="left:1652px;top:730px" width="16" height="13"><text x="0" y="11" font-family="Liberation Sans" font-weight="bold" font-size="12" fill="#8a8a8a">¶</text><path d="M9 10l5-5" stroke="#8a8a8a"/></svg>
<svg class="a" style="left:1683px;top:730px" width="12" height="13"><path d="M1 3h7l3 3v6H4z" fill="#cfcfcf"/><path d="M1 3v4h4" fill="#555"/></svg>
<svg class="a" style="left:1713px;top:730px" width="12" height="13"><path d="M1 3h10M4 3V1h4v2M2 4h8v8H2z" stroke="#cfcfcf" fill="none"/><path d="M4 5v6M6 5v6M8 5v6" stroke="#cfcfcf"/></svg>
<div class="a" style="left:1740px;top:735px;width:10px;height:10px;background:repeating-linear-gradient(135deg,transparent 0 2px,#666 2px 3px)"></div>
<div class="a" style="left:1545px;top:747px;width:206px;height:7px;background:#3a3a3a"></div>
<div class="a" style="left:1638px;top:749px;width:22px;height:4px;background:repeating-linear-gradient(90deg,#111 0 1px,transparent 1px 2px)"></div>
<div id="dlg" class="a">
<div id="dlgt" class="a">Absatzformatoptionen</div>
<div class="a" style="left:15px;top:37px;width:209px;height:479px;border:1px solid #cf8a3c;background:#484848"></div>
<div class="a li" style="left:16px;top:38px;width:207px;height:16px;background:#484848;font-weight:normal">Allgemein</div>
<div class="a li" style="left:16px;top:54px;width:207px;height:16px;background:#484848;font-weight:normal">Grundlegende Zeichenformate</div>
<div class="a li" style="left:16px;top:70px;width:207px;height:16px;background:#484848;font-weight:normal">Erweiterte Zeichenformate</div>
<div class="a li" style="left:16px;top:86px;width:207px;height:16px;background:#484848;font-weight:normal">Einzüge und Abstände</div>
<div class="a li" style="left:16px;top:102px;width:207px;height:16px;background:#484848;font-weight:normal">Tabulatoren</div>
<div class="a li" style="left:16px;top:118px;width:207px;height:16px;background:#484848;font-weight:normal">Absatzlinien</div>
<div class="a li" style="left:16px;top:134px;width:207px;height:16px;background:#484848;font-weight:normal">Umbruchoptionen</div>
<div class="a li" style="left:16px;top:150px;width:207px;height:16px;background:#484848;font-weight:normal">Silbentrennung</div>
<div class="a li" style="left:16px;top:166px;width:207px;height:16px;background:#484848;font-weight:normal">Abstände</div>
<div class="a li" style="left:16px;top:182px;width:207px;height:16px;background:#4c5a71;font-weight:normal;color:#fff">Spaltenspanne</div>
<div class="a li" style="left:16px;top:198px;width:207px;height:16px;background:#484848;font-weight:normal">Initialen und verschachtelte Formate</div>
<div class="a li" style="left:16px;top:214px;width:207px;height:16px;background:#484848;font-weight:normal">GREP-Stil</div>
<div class="a li" style="left:16px;top:230px;width:207px;height:16px;background:#484848;font-weight:normal">Aufzählungszeichen und Nummerierung</div>
<div class="a li" style="left:16px;top:246px;width:207px;height:16px;background:#484848;font-weight:normal">Zeichenfarbe</div>
<div class="a li" style="left:16px;top:262px;width:207px;height:16px;background:#484848;font-weight:normal">OpenType-Funktionen</div>
<div class="a li" style="left:16px;top:278px;width:207px;height:16px;background:#484848;font-weight:normal">Unterstreichungsoptionen</div>
<div class="a li" style="left:16px;top:294px;width:207px;height:16px;background:#484848;font-weight:normal">Durchstreichungsoptionen</div>
<div class="a li" style="left:16px;top:310px;width:207px;height:16px;background:#484848;font-weight:normal">Tagsexport</div>
<div class="a" style="left:224px;top:37px;width:13px;height:480px;background:#3a3a3a"></div>
<div class="a tri-up" style="left:227px;top:41px"></div>
<div class="a tri-dn" style="left:227px;top:507px"></div>
<div class="a" style="right:388px;top:39px;height:16px;line-height:16px;font-size:12.3px;color:#e6e6e6;white-space:nowrap;">Formatname:</div>
<div class="a fld" style="left:429px;top:39px;width:253px;height:17px;font-size:13.4px;line-height:16px">Zwischenüberschrift</div>
<div class="a" style="right:388px;top:63px;height:16px;line-height:16px;font-size:9.2px;color:#e6e6e6;white-space:nowrap;">Position:</div>
<div class="a" style="left:247px;top:83px;font-size:12.2px;line-height:16px;color:#e6e6e6">Spaltenspanne</div>
<div class="a" style="left:247px;top:106px;width:542px;height:1px;background:#3a3a3a"></div>
<div class="a" style="left:247px;top:107px;width:542px;height:1px;background:#555"></div>
<div class="a" style="right:401px;top:129px;height:16px;line-height:16px;font-size:12.3px;color:#e6e6e6;white-space:nowrap;">Absatzlayout:</div>
<div class="a dd" style="left:418px;top:129px;width:177px;height:17px">Spaltenspanne<div class="a" style="right:0;top:0;width:13px;height:15px;border-left:1px solid #333"><div class="a tri-dn2" style="left:2px;top:5px"></div></div></div>
<div class="a" style="right:401px;top:154px;height:16px;line-height:16px;font-size:12.3px;color:#e6e6e6;white-space:nowrap;">Anzahl:</div>
<div class="a stp" style="left:418px;top:153px;opacity:.45;"><div class="a tri-up2" style="left:2px;top:3px"></div><div class="a tri-dn2" style="left:2px;top:10px"></div></div>
<div class="a fld" style="left:432px;top:153px;width:123px;height:17px;font-size:12.5px;line-height:16px">Alle</div>
<div class="a" style="left:541px;top:153px;width:14px;height:17px;background:#8e8e8e;border-left:1px solid #666"><div class="a tri-dn2" style="left:2px;top:6px"></div></div>
<div class="a" style="right:401px;top:179px;height:16px;line-height:16px;font-size:12.3px;color:#e6e6e6;white-space:nowrap;">Abstand vor Spalte:</div>
<div class="a stp" style="left:418px;top:178px;"><div class="a tri-up2" style="left:2px;top:3px"></div><div class="a tri-dn2" style="left:2px;top:10px"></div></div>
<div class="a fld" style="left:432px;top:178px;width:123px;height:17px;font-size:12.5px;line-height:16px">0 mm</div>
<div class="a" style="right:401px;top:204px;height:16px;line-height:16px;font-size:12.3px;color:#e6e6e6;white-space:nowrap;">Abstand nach Spalte:</div>
<div class="a stp" style="left:418px;top:203px;"><div class="a tri-up2" style="left:2px;top:3px"></div><div class="a tri-dn2" style="left:2px;top:10px"></div></div>
<div class="a fld" style="left:432px;top:203px;width:123px;height:17px;font-size:12.5px;line-height:16px">0 mm</div>
<div class="a" style="left:566px;top:154px;line-height:16px;font-size:12.3px;color:#e6e6e6">Spalten</div>
<div class="a" style="left:17px;top:562px;width:11px;height:11px;background:#3c3c3c;border:1px solid #2a2a2a"></div>
<div class="a" style="left:18px;top:558px;font-size:13px;color:#eee;line-height:14px">&#10003;</div>
<div class="a" style="left:31px;top:560px;line-height:16px;font-size:12.4px;color:#e6e6e6">Vorschau</div>
<div class="a btn" style="left:597px;top:559px;width:93px;height:19px">Abbrechen</div>
<div class="a btn" style="left:701px;top:559px;width:95px;height:19px;border:2px solid #262626;line-height:15px">OK</div>
</div>

</body></html>
